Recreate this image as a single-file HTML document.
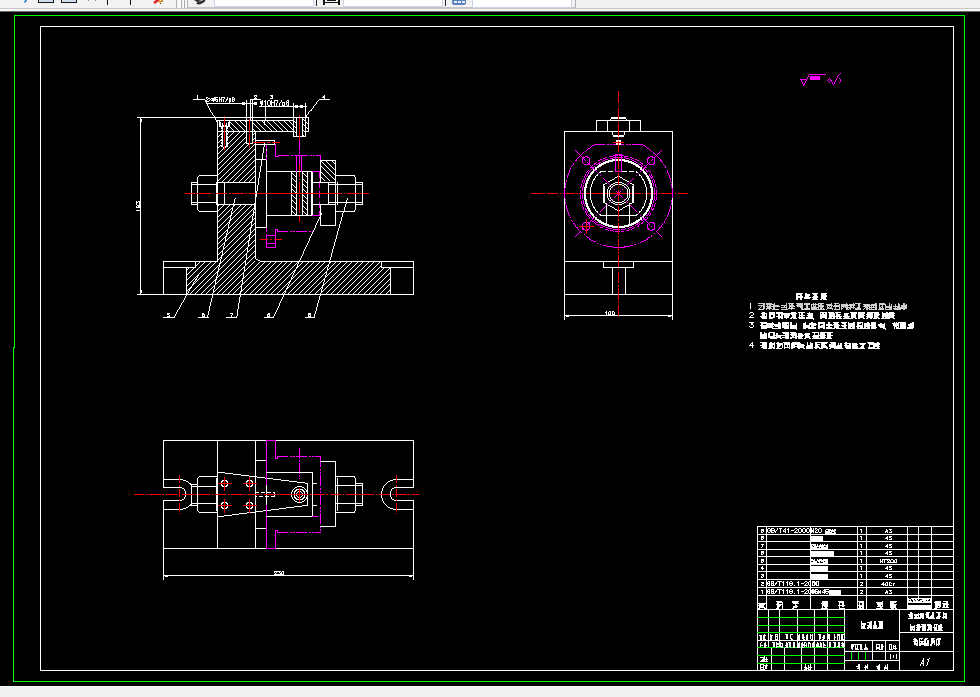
<!DOCTYPE html>
<html><head><meta charset="utf-8"><title>CAD</title>
<style>html,body{margin:0;padding:0;background:#000;overflow:hidden}svg{display:block}text{font-family:"Liberation Sans",sans-serif}</style></head><body>
<svg width="980" height="697" viewBox="0 0 980 697" shape-rendering="crispEdges">
<defs>
<linearGradient id="tg" x1="0" y1="0" x2="0" y2="1"><stop offset="0" stop-color="#f0f0f0"/><stop offset="0.78" stop-color="#ececec"/><stop offset="0.88" stop-color="#8a8a8a"/><stop offset="1" stop-color="#000"/></linearGradient>
</defs>
<rect x="0" y="0" width="980" height="697" fill="#000"/>
<rect x="0" y="0" width="980" height="8" fill="#f0f0f0"/>
<rect x="0" y="8" width="980" height="1" fill="#c9c9c9"/>
<rect x="0" y="9" width="980" height="2" fill="#f5f5f5"/>
<rect x="0" y="11" width="980" height="1" fill="#6a6a6a"/>
<rect x="0" y="0" width="176" height="8" fill="#f2f2f2"/><rect x="176" y="0" width="1" height="8" fill="#b4b4b4"/>
<rect x="178" y="0" width="3" height="8" fill="#fafafa"/><rect x="181" y="0" width="1" height="8" fill="#b0b0b0"/><rect x="183" y="0" width="1" height="8" fill="#fafafa"/><rect x="184" y="0" width="1" height="8" fill="#b0b0b0"/><rect x="186" y="0" width="1" height="8" fill="#fafafa"/><rect x="187" y="0" width="1" height="8" fill="#b0b0b0"/>
<rect x="188" y="0" width="387" height="8" fill="#f2f2f2"/><rect x="575" y="0" width="1" height="8" fill="#b0b0b0"/><rect x="188" y="7" width="388" height="1" fill="#c4c4c4"/>
<rect x="214.5" y="-1" width="99" height="7.5" fill="#fff" stroke="#cdd5e4" stroke-width="1"/>
<rect x="343.5" y="-1" width="99" height="7.5" fill="#fff" stroke="#cdd5e4" stroke-width="1"/>
<rect x="472.5" y="-1" width="99" height="8" fill="#fff" stroke="#cdd5e4" stroke-width="1"/>
<path d="M24.5 2.6L26.6 -0.4" stroke="#2a6fd6" stroke-width="1.6" shape-rendering="auto"/>
<rect x="38.5" y="-1" width="15" height="3.5" fill="#cfdcee" stroke="#1a1a1a" stroke-width="1"/>
<rect x="61.5" y="-1" width="15" height="3.5" fill="#cfdcee" stroke="#1a1a1a" stroke-width="1"/>
<rect x="88" y="0" width="1" height="1" fill="#7a8aa8"/><rect x="95" y="0" width="1" height="1" fill="#7a8aa8"/>
<rect x="107" y="0" width="1" height="5" fill="#111"/><rect x="130" y="0" width="1" height="5" fill="#111"/>
<path d="M154 3L159 -0.5" stroke="#d22" stroke-width="2.6" shape-rendering="auto"/><rect x="159" y="1" width="2" height="2" fill="#f0b000"/><rect x="161" y="0" width="2" height="2" fill="#e08020"/><rect x="160" y="3" width="1" height="1" fill="#444"/>
<path d="M194 0L205.5 0L204.5 2L200 4.6L196 4L197.5 2.2Z" fill="#2e2e2e" shape-rendering="auto"/><path d="M199 1.2L203 0.2" stroke="#ddd" stroke-width="0.8" shape-rendering="auto"/>
<rect x="316" y="0" width="1" height="6" fill="#222"/>
<path d="M324 0V4.5M339 0V4.5M324 2.5H339M327 0.5H336" stroke="#111" stroke-width="1.2" fill="none"/>
<rect x="445" y="0" width="1" height="6" fill="#222"/>
<rect x="452" y="-1" width="14" height="5.5" rx="1" fill="#5d82bd"/><rect x="454" y="1" width="3" height="2" fill="#e4ebf6"/><rect x="458" y="1" width="3" height="2" fill="#e4ebf6"/><rect x="462" y="1" width="3" height="2" fill="#e4ebf6"/>
<rect x="0" y="686" width="980" height="11" fill="#f0f0f0"/><rect x="0" y="686" width="980" height="1" fill="#fbfbfb"/>
<path d="M964.5 15v667M14.5 15v333M13.5 347v335M865.5 652v8M858.5 652v8M851.5 652v8M14 681.5h950M15 15.5h949M757 632.5h88M757 625.5h88M757 663.5h88M757 617.5h88M757 655.5h88M757 647.5h7M766 647.5h10M777 647.5h4M783 647.5h2M788 647.5h2M791 647.5h2M795 647.5h2M800 647.5h1M804 647.5h6M811 647.5h2M814 647.5h7M822 647.5h1M826 647.5h3M830 647.5h3M835 647.5h4M840 647.5h3M844 647.5h1" stroke="#0f0" stroke-width="1" fill="none"/>
<path d="M247.5 247v6M899.5 609v62M252.5 99v45M252.5 216v6M945.5 613v6M766.5 313v6M766.5 322v7M766.5 333v6M766.5 342v7M766.5 526v84M766.5 657v5M766.5 664v5M771.5 342v7M771.5 528v5M771.5 581v5M771.5 589v5M771.5 635v6M771.5 648v7M771.5 656v7M771.5 664v7M953.5 26v645M328.5 182v11M328.5 194v11M328.5 264v3M218.5 267v5M345.5 204v3M947.5 601v7M326.5 271v4M861.5 346v3M861.5 529v4M861.5 536v4M861.5 544v4M861.5 551v4M861.5 559v4M861.5 566v4M861.5 574v4M861.5 621v8M861.5 644v6M845.5 322v7M845.5 342v6M652.5 187v13M762.5 312v7M762.5 342v6M762.5 544v3M762.5 566v4M762.5 590v4M762.5 659v3M822.5 536v6M822.5 601v9M335.5 160v33M335.5 194v32M335.5 239v3M335.5 461v33M335.5 495v32M896.5 322v7M896.5 559v4M896.5 654v5M877.5 342v7M877.5 602v3M877.5 666v3M233.5 130v3M233.5 203v4M40.5 26v645M274.5 100v7M296.5 117v20M296.5 172v21M296.5 194v22M282.5 102v5M815.5 323v3M815.5 342v7M815.5 544v6M815.5 589v5M796.5 293v7M796.5 323v7M796.5 333v6M796.5 605v3M801.5 293v7M801.5 312v7M801.5 333v6M801.5 529v3M801.5 643v12M801.5 656v7M801.5 664v7M312.5 172v21M312.5 194v21M312.5 472v44M215.5 97v4M215.5 117v3M215.5 279v6M891.5 644v6M926.5 612v6M768.5 333v5M768.5 609v8M768.5 618v7M768.5 626v6M768.5 633v14M826.5 312v7M826.5 346v3M289.5 281v3M316.5 307v4M217.5 99v3M217.5 120v73M217.5 194v68M217.5 271v5M217.5 440v54M217.5 495v54M819.5 322v7M819.5 545v5M819.5 559v6M819.5 634v7M255.5 97v3M255.5 131v11M255.5 143v50M255.5 194v65M255.5 440v43M255.5 484v10M255.5 495v10M255.5 506v43M857.5 322v7M857.5 346v3M857.5 526v84M857.5 644v6M777.5 333v5M777.5 342v7M777.5 601v9M777.5 634v7M818.5 322v7M818.5 332v7M818.5 529v3M818.5 581v5M818.5 590v4M818.5 643v4M629.5 120v12M629.5 189v9M629.5 203v23M240.5 291v6M830.5 332v7M830.5 344v5M830.5 642v5M219.5 97v5M219.5 120v7M219.5 263v4M823.5 322v7M823.5 559v6M823.5 635v6M823.5 642v6M243.5 272v7M848.5 316v3M848.5 322v7M237.5 309v7M803.5 323v6M803.5 344v5M803.5 634v7M825.5 293v7M825.5 312v7M825.5 345v3M825.5 530v5M825.5 589v4M140.5 117v178M939.5 601v7M939.5 612v7M939.5 638v7M249.5 234v7M610.5 311v5M782.5 312v7M782.5 322v6M782.5 343v5M782.5 602v8M782.5 643v5M881.5 606v4M881.5 644v6M413.5 261v34M413.5 440v48M413.5 500v80M757.5 526v91M757.5 618v7M757.5 626v6M757.5 633v14M757.5 648v7M757.5 656v7M757.5 664v7M858.5 312v7M858.5 322v7M858.5 664v5M333.5 246v3M228.5 122v5M228.5 224v5M907.5 526v84M307.5 171v22M307.5 194v22M307.5 483v11M307.5 495v11M812.5 313v6M812.5 343v6M812.5 546v4M812.5 581v5M812.5 589v5M812.5 634v7M812.5 643v4M355.5 177v16M355.5 194v16M355.5 478v16M355.5 495v16M828.5 322v7M809.5 323v6M809.5 336v3M809.5 529v3M837.5 312v7M837.5 345v4M837.5 634v7M246.5 100v44M246.5 253v7M941.5 624v7M256.5 102v3M256.5 191v6M779.5 312v7M779.5 343v4M779.5 581v5M779.5 589v5M779.5 604v3M779.5 609v8M779.5 618v7M779.5 626v6M779.5 633v14M839.5 314v5M839.5 601v9M839.5 634v7M839.5 642v6M672.5 131v57M672.5 198v122M264.5 120v5M264.5 143v4M814.5 332v7M814.5 559v6M814.5 581v5M814.5 609v8M814.5 618v7M814.5 626v6M814.5 633v14M814.5 648v7M814.5 656v7M814.5 664v7M207.5 103v3M207.5 315v3M362.5 182v23M362.5 483v11M362.5 495v11M793.5 601v3M793.5 606v4M793.5 642v6M306.5 115v3M908.5 598v5M765.5 642v6M765.5 665v4M286.5 101v4M869.5 323v6M869.5 342v7M869.5 622v6M882.5 312v7M882.5 559v4M882.5 601v6M882.5 621v8M882.5 644v6M920.5 600v3M920.5 613v6M920.5 643v3M918.5 526v74M918.5 613v6M885.5 583v3M885.5 640v21M885.5 665v4M260.5 101v3M260.5 166v6M922.5 598v3M922.5 624v7M922.5 641v4M232.5 97v5M232.5 207v4M209.5 306v5M773.5 312v6M773.5 332v7M773.5 581v5M773.5 589v5M773.5 642v5M336.5 235v4M811.5 322v7M811.5 528v5M938.5 612v7M938.5 625v6M938.5 638v8M795.5 312v7M795.5 332v7M795.5 601v7M836.5 312v7M932.5 612v7M211.5 298v4M285.5 290v3M887.5 530v3M887.5 536v4M887.5 544v4M887.5 551v4M887.5 566v4M887.5 574v4M887.5 582v4M887.5 591v3M887.5 664v7M271.5 100v7M646.5 173v4M646.5 187v13M646.5 210v4M871.5 322v7M871.5 621v8M287.5 286v3M889.5 312v7M889.5 582v4M889.5 644v6M234.5 98v3M234.5 199v4M827.5 332v7M827.5 544v6M827.5 559v6M827.5 566v6M827.5 574v6M827.5 601v6M827.5 608v9M827.5 618v7M827.5 626v6M827.5 633v14M827.5 648v7M827.5 656v7M827.5 664v7M863.5 312v7M863.5 343v6M863.5 601v9M216.5 182v11M216.5 194v11M216.5 276v4M216.5 478v16M216.5 495v16M238.5 303v6M866.5 526v84M866.5 647v3M783.5 581v5M783.5 589v5M917.5 600v3M917.5 624v7M917.5 640v6M650.5 180v8M650.5 199v8M254.5 102v3M254.5 203v7M226.5 123v24M226.5 233v4M317.5 303v4M919.5 624v7M919.5 638v8M759.5 603v7M564.5 131v57M564.5 198v122M913.5 322v6M913.5 598v5M266.5 160v33M266.5 194v34M266.5 485v9M266.5 495v10M868.5 625v4M627.5 189v9M893.5 312v7M893.5 323v3M893.5 560v3M893.5 583v3M893.5 601v9M893.5 645v4M893.5 655v3M931.5 526v84M931.5 615v4M931.5 625v6M931.5 638v8M810.5 342v7M810.5 526v84M810.5 634v5M810.5 643v5M810.5 664v7M327.5 267v4M844.5 313v6M844.5 322v7M844.5 608v9M844.5 618v7M844.5 626v6M844.5 633v14M844.5 648v7M844.5 656v7M844.5 664v7M847.5 313v6M943.5 603v5M943.5 612v7M764.5 312v7M764.5 332v7M764.5 607v3M764.5 634v7M764.5 643v5M764.5 656v6M898.5 322v7M824.5 322v7M824.5 332v7M824.5 589v5M824.5 635v4M340.5 221v3M817.5 344v4M817.5 544v3M817.5 591v3M817.5 642v5M760.5 332v7M760.5 635v6M760.5 643v4M760.5 664v7M894.5 322v7M894.5 560v3M319.5 296v4M816.5 293v7M816.5 342v7M816.5 546v4M816.5 561v4M816.5 581v5M816.5 644v3M263.5 147v6M870.5 621v8M331.5 253v4M933.5 612v7M279.5 103v4M279.5 303v3M270.5 101v4M308.5 117v15M308.5 313v5M197.5 95v5M197.5 177v16M197.5 194v16M197.5 275v3M197.5 478v33M346.5 200v4M323.5 282v4M230.5 98v4M230.5 215v6M805.5 293v6M805.5 322v7M805.5 333v6M805.5 529v3M805.5 664v7M925.5 624v7M925.5 638v8M259.5 172v6M900.5 322v7M311.5 171v22M311.5 194v22M297.5 105v3M297.5 264v4M338.5 228v3M612.5 131v4M612.5 159v3M612.5 225v3M612.5 267v28M612.5 311v5M851.5 312v7M851.5 644v5M309.5 238v3M914.5 600v3M914.5 625v6M914.5 638v7M600.5 164v3M600.5 220v3M930.5 598v5M930.5 616v3M930.5 624v7M635.5 163v3M635.5 221v3M304.5 491v3M304.5 495v3M293.5 103v34M614.5 312v4M295.5 105v3M921.5 600v3M921.5 641v4M833.5 312v7M833.5 551v6M937.5 616v3M596.5 120v12M596.5 167v3M596.5 217v3M936.5 624v7M936.5 639v7M334.5 242v4M886.5 529v3M886.5 590v3M302.5 105v3M302.5 117v20M302.5 171v22M302.5 194v22M314.5 314v4M804.5 642v5M867.5 312v7M867.5 322v7M867.5 664v5M806.5 346v3M806.5 529v3M806.5 635v6M806.5 643v4M806.5 667v4M916.5 598v5M916.5 639v3M916.5 643v3M189.5 288v3M604.5 186v17M834.5 313v6M834.5 322v7M834.5 529v6M834.5 634v7M834.5 642v6M644.5 171v3M644.5 181v3M644.5 203v3M644.5 213v3M163.5 261v34M163.5 440v48M163.5 500v80M841.5 343v6M841.5 634v7M813.5 296v4M813.5 335v4M813.5 528v5M813.5 589v5M813.5 642v6M585.5 183v21M191.5 182v11M191.5 194v11M191.5 484v10M191.5 495v11M792.5 312v6M792.5 342v7M792.5 582v3M792.5 590v3M820.5 312v7M820.5 332v7M820.5 544v3M820.5 590v4M820.5 634v5M820.5 642v5M842.5 601v6M842.5 634v7M842.5 642v5M606.5 203v23M606.5 311v5M784.5 313v5M784.5 342v7M784.5 648v7M784.5 656v7M784.5 664v7M261.5 101v6M261.5 159v7M761.5 322v7M761.5 332v7M761.5 529v4M761.5 536v4M761.5 551v4M761.5 559v4M761.5 635v6M212.5 98v3M212.5 293v5M872.5 312v6M872.5 640v21M852.5 343v6M852.5 644v6M791.5 312v3M791.5 322v7M791.5 332v4M791.5 343v6M791.5 638v3M821.5 293v7M821.5 325v3M821.5 342v7M821.5 529v3M821.5 559v3M821.5 643v5M275.5 573v3M321.5 289v4M608.5 160v3M608.5 224v3M608.5 312v4M272.5 95v4M874.5 312v7M874.5 621v8M284.5 102v5M587.5 178v6M587.5 203v6M770.5 312v7M770.5 336v3M770.5 529v3M770.5 634v7M855.5 312v7M855.5 644v6M221.5 97v5M221.5 126v3M221.5 255v4M300.5 105v3M202.5 313v5M253.5 210v6M862.5 322v7M862.5 601v9M241.5 284v8M864.5 323v6M864.5 623v6M248.5 240v7M227.5 97v3M227.5 126v3M227.5 136v5M227.5 142v5M227.5 229v4M609.5 190v7M382.5 488v3M382.5 498v3M905.5 322v7M239.5 297v6M843.5 601v6M856.5 343v6M330.5 257v3M794.5 342v6M794.5 642v6M935.5 601v9M645.5 172v3M645.5 184v3M645.5 200v3M645.5 212v3M631.5 161v3M631.5 223v3M324.5 95v5M324.5 278v4M763.5 529v3M763.5 536v3M763.5 551v3M763.5 559v3M763.5 574v3M763.5 603v5M763.5 635v6M763.5 664v7M276.5 103v4M798.5 333v6M798.5 529v3M798.5 581v5M798.5 589v5M222.5 123v24M222.5 250v6M344.5 207v5M846.5 342v7M797.5 293v7M797.5 342v6M797.5 601v3M797.5 609v8M797.5 618v7M797.5 626v6M797.5 633v15M267.5 101v4M267.5 314v4M332.5 249v4M607.5 120v12M607.5 189v9M876.5 625v4M876.5 644v6M853.5 644v3M262.5 100v5M262.5 153v7M322.5 285v4M776.5 333v6M776.5 642v6M381.5 261v7M381.5 491v3M381.5 495v3M265.5 100v21M281.5 572v4M883.5 582v4M778.5 312v7M778.5 322v7M778.5 342v7M778.5 601v9M280.5 573v3M832.5 529v3M632.5 186v17M895.5 604v6M895.5 645v5M808.5 313v6M808.5 325v4M808.5 582v3M808.5 590v3M808.5 642v5M808.5 665v6M785.5 332v7M785.5 528v5M750.5 303v6M780.5 323v6M780.5 335v4M780.5 343v3M780.5 528v5M780.5 642v5M250.5 99v22M250.5 227v8M193.5 282v3M590.5 173v4M590.5 187v13M590.5 210v4M213.5 98v4M213.5 289v4M229.5 98v6M229.5 120v7M229.5 220v4M789.5 313v3M789.5 342v7M789.5 582v3M789.5 590v3M789.5 642v5M223.5 99v3M223.5 246v4M860.5 325v4M860.5 644v6M875.5 322v7M875.5 621v8M873.5 342v7M873.5 625v4M840.5 316v3M840.5 343v6M840.5 590v6M878.5 312v4M878.5 342v7M878.5 665v6M224.5 182v11M224.5 194v11M224.5 242v4M291.5 171v22M291.5 194v22M291.5 277v3M599.5 164v3M599.5 220v3M890.5 560v3M890.5 601v7M890.5 654v5M242.5 102v3M242.5 278v7M298.5 261v3M283.5 294v3M283.5 571v5M802.5 312v7M802.5 334v3M802.5 529v3M802.5 634v5M802.5 642v6M251.5 221v7M257.5 185v6M915.5 638v7M786.5 634v5M786.5 642v6M245.5 260v6M787.5 342v6M787.5 581v5M787.5 589v5M787.5 634v5M787.5 643v5M831.5 530v5M220.5 122v5M220.5 259v5M767.5 529v3M767.5 582v3M767.5 590v3M231.5 211v5M231.5 315v3M592.5 171v3M592.5 181v3M592.5 203v3M592.5 213v3M294.5 270v3M294.5 491v3M294.5 495v3M647.5 175v4M647.5 208v4M944.5 603v5M186.5 267v29M318.5 300v3M800.5 293v7M204.5 314v4M769.5 312v7M769.5 332v6M769.5 343v6M769.5 581v5M769.5 589v5M781.5 312v7M790.5 322v7M790.5 634v5M790.5 642v6M225.5 236v6M595.5 167v3M595.5 217v3M850.5 343v6M625.5 267v28M838.5 324v5M838.5 343v6M838.5 642v5M859.5 601v9M859.5 664v7M305.5 103v34M269.5 313v5M912.5 322v7M912.5 613v6M912.5 626v4M208.5 311v4M924.5 639v7M640.5 120v12M640.5 167v3M640.5 217v3M593.5 169v4M593.5 214v4M923.5 613v6M923.5 658v8M605.5 161v3M605.5 223v3M775.5 324v3M775.5 634v7M772.5 322v7M772.5 343v5M927.5 640v6M927.5 662v3M934.5 624v7M934.5 640v5M586.5 180v8M586.5 199v8M807.5 342v7M807.5 634v7M136.5 201v4M854.5 322v7M303.5 251v3M601.5 163v3M601.5 221v3M277.5 100v3M788.5 313v5M788.5 322v7M788.5 332v7M788.5 528v5M598.5 165v3M598.5 219v3M288.5 100v7M169.5 315v3M329.5 260v4M641.5 167v3M641.5 217v3M835.5 342v7M835.5 532v3M835.5 642v5M879.5 324v3M879.5 621v8M879.5 644v6M879.5 664v7M310.5 313v5M342.5 213v4M206.5 100v4M624.5 131v4M624.5 159v3M624.5 225v3M628.5 160v3M628.5 224v3M643.5 169v4M643.5 214v4M880.5 323v5M880.5 559v4M880.5 602v8M829.5 312v7M829.5 322v7M829.5 344v3M829.5 590v6M829.5 634v7M829.5 642v6M884.5 323v6M884.5 559v4M884.5 667v4M751.5 322v3M214.5 97v4M214.5 285v4M865.5 644v6M865.5 665v6M244.5 102v3M244.5 130v3M244.5 266v6M195.5 261v7M928.5 612v7M928.5 624v7M928.5 640v6M928.5 659v3M649.5 178v6M649.5 203v6M603.5 162v3M603.5 184v19M603.5 222v3M603.5 261v7M341.5 217v4M139.5 201v7M138.5 205v3M591.5 172v3M591.5 184v3M591.5 200v3M591.5 212v3M799.5 312v7M799.5 342v7M799.5 634v7M799.5 642v6M910.5 599v4M910.5 612v7M910.5 624v7M940.5 601v6M315.5 225v3M315.5 311v3M390.5 267v28M390.5 491v6M584.5 187v13M636.5 164v3M636.5 220v3M633.5 162v3M633.5 184v19M633.5 222v3M633.5 261v7M589.5 175v4M589.5 208v4M909.5 614v3M320.5 160v23M320.5 204v22M320.5 293v3M337.5 182v11M337.5 194v11M337.5 231v4M337.5 478v16M337.5 495v16M638.5 165v3M638.5 219v3M210.5 302v4M258.5 178v7M185.5 491v3M325.5 275v3M637.5 164v3M637.5 220v3M774.5 312v6M774.5 332v7M774.5 342v7M774.5 529v3M774.5 642v5M946.5 601v7M946.5 613v6M648.5 176v5M648.5 206v5M588.5 176v5M588.5 206v5M339.5 224v4M141.5 119v3M141.5 290v3M752.5 322v3M752.5 342v6M651.5 183v21M41 26.5h912M761 669.5h4M804 669.5h1M809 669.5h1M182 499.5h2M293 499.5h1M296 499.5h3M300 499.5h3M305 499.5h1M392 499.5h2M243 104.5h1M255 104.5h1M315 104.5h1M758 556.5h195M753 325.5h1M760 325.5h12M774 325.5h6M783 325.5h5M792 325.5h4M804 325.5h4M812 325.5h3M822 325.5h1M826 325.5h7M835 325.5h5M841 325.5h6M849 325.5h5M859 325.5h3M865 325.5h10M878 325.5h6M895 325.5h3M901 325.5h4M908 325.5h4M220 151.5h1M225 151.5h1M231 151.5h1M236 151.5h1M241 151.5h1M247 151.5h1M252 151.5h1M193 99.5h12M207 99.5h1M210 99.5h1M216 99.5h1M220 99.5h1M226 99.5h1M233 99.5h1M251 99.5h10M319 99.5h11M137 202.5h1M192 202.5h24M294 202.5h1M305 202.5h1M329 202.5h33M611 202.5h2M615 202.5h7M624 202.5h2M218 227.5h1M223 227.5h1M229 227.5h1M234 227.5h1M239 227.5h1M245 227.5h1M256 227.5h10M613 227.5h5M619 227.5h5M188 268.5h1M193 268.5h1M198 268.5h1M204 268.5h1M209 268.5h1M215 268.5h1M220 268.5h1M226 268.5h1M231 268.5h1M237 268.5h1M242 268.5h1M247 268.5h1M253 268.5h1M258 268.5h1M264 268.5h1M269 268.5h1M275 268.5h1M280 268.5h1M285 268.5h1M291 268.5h1M296 268.5h1M302 268.5h1M307 268.5h1M313 268.5h1M318 268.5h1M324 268.5h1M329 268.5h1M334 268.5h1M340 268.5h1M345 268.5h1M351 268.5h1M356 268.5h1M362 268.5h1M367 268.5h1M373 268.5h1M378 268.5h1M383 268.5h1M389 268.5h1M779 602.5h3M792 602.5h5M823 602.5h4M840 602.5h2M860 602.5h2M876 602.5h6M891 602.5h5M909 602.5h21M934 602.5h5M762 562.5h1M811 562.5h5M824 562.5h3M887 562.5h9M293 196.5h1M304 196.5h1M760 607.5h3M794 607.5h1M825 607.5h2M860 607.5h1M891 607.5h4M908 607.5h23M936 607.5h3M942 607.5h7M222 223.5h1M227 223.5h1M233 223.5h1M238 223.5h1M243 223.5h1M249 223.5h1M254 223.5h1M316 223.5h1M602 223.5h3M632 223.5h3M167 314.5h2M175 314.5h1M203 314.5h1M232 314.5h1M268 314.5h1M274 314.5h1M309 314.5h1M609 314.5h1M613 314.5h1M753 314.5h1M763 314.5h1M771 314.5h2M783 314.5h5M793 314.5h2M809 314.5h3M821 314.5h4M830 314.5h3M838 314.5h3M845 314.5h2M852 314.5h3M859 314.5h4M866 314.5h6M875 314.5h5M883 314.5h10M222 212.5h1M227 212.5h1M233 212.5h1M238 212.5h1M244 212.5h1M249 212.5h1M254 212.5h1M293 212.5h1M304 212.5h1M343 212.5h1M597 212.5h1M639 212.5h1M274 571.5h7M282 571.5h1M758 571.5h195M164 509.5h15M180 509.5h3M271 509.5h8M393 509.5h3M397 509.5h16M761 567.5h1M811 567.5h16M886 567.5h1M889 567.5h2M198 263.5h1M203 263.5h1M209 263.5h1M214 263.5h1M225 263.5h1M231 263.5h1M236 263.5h1M242 263.5h1M247 263.5h1M252 263.5h1M258 263.5h1M263 263.5h1M269 263.5h1M274 263.5h1M280 263.5h1M285 263.5h1M290 263.5h1M296 263.5h1M301 263.5h1M307 263.5h1M312 263.5h1M318 263.5h1M323 263.5h1M334 263.5h1M339 263.5h1M345 263.5h1M350 263.5h1M356 263.5h1M361 263.5h1M367 263.5h1M372 263.5h1M378 263.5h1M187 279.5h1M193 279.5h1M195 279.5h2M198 279.5h1M204 279.5h1M209 279.5h1M220 279.5h1M226 279.5h1M231 279.5h1M236 279.5h1M247 279.5h1M253 279.5h1M258 279.5h1M264 279.5h1M269 279.5h1M274 279.5h1M280 279.5h1M285 279.5h1M296 279.5h1M302 279.5h1M307 279.5h1M313 279.5h1M318 279.5h1M323 279.5h1M329 279.5h1M334 279.5h1M340 279.5h1M345 279.5h1M351 279.5h1M356 279.5h1M362 279.5h1M367 279.5h1M372 279.5h1M378 279.5h1M383 279.5h1M389 279.5h1M137 294.5h276M565 294.5h53M619 294.5h53M798 294.5h2M806 294.5h4M813 294.5h3M822 294.5h3M911 613.5h1M921 613.5h2M927 613.5h1M944 613.5h1M216 120.5h8M225 120.5h24M251 120.5h42M304 120.5h1M597 120.5h43M222 217.5h1M228 217.5h1M233 217.5h1M239 217.5h1M244 217.5h1M249 217.5h1M319 217.5h1M762 551.5h1M811 551.5h22M860 551.5h1M889 551.5h3M761 577.5h2M811 577.5h16M889 577.5h3M187 285.5h1M192 285.5h1M198 285.5h1M203 285.5h1M209 285.5h1M220 285.5h1M225 285.5h1M230 285.5h1M236 285.5h1M247 285.5h1M252 285.5h1M258 285.5h1M263 285.5h1M268 285.5h1M274 285.5h1M279 285.5h1M285 285.5h1M288 285.5h1M290 285.5h1M296 285.5h1M301 285.5h1M307 285.5h1M312 285.5h1M317 285.5h1M328 285.5h1M334 285.5h1M339 285.5h1M345 285.5h1M350 285.5h1M356 285.5h1M361 285.5h1M366 285.5h1M372 285.5h1M377 285.5h1M383 285.5h1M388 285.5h1M749 326.5h1M753 326.5h1M762 326.5h12M776 326.5h4M783 326.5h5M792 326.5h4M804 326.5h4M812 326.5h2M820 326.5h3M835 326.5h3M842 326.5h2M849 326.5h5M856 326.5h6M865 326.5h4M872 326.5h3M881 326.5h3M895 326.5h1M901 326.5h4M909 326.5h3M221 161.5h1M226 161.5h1M231 161.5h1M237 161.5h1M242 161.5h1M248 161.5h1M253 161.5h1M321 161.5h1M326 161.5h1M332 161.5h1M606 161.5h6M625 161.5h6M762 336.5h4M771 336.5h2M778 336.5h2M786 336.5h2M792 336.5h2M797 336.5h4M806 336.5h3M812 336.5h6M821 336.5h3M828 336.5h2M192 182.5h5M218 182.5h37M306 182.5h1M313 182.5h22M356 182.5h6M615 182.5h3M619 182.5h3M241 475.5h8M220 172.5h1M226 172.5h1M231 172.5h1M237 172.5h1M242 172.5h1M248 172.5h1M253 172.5h1M321 172.5h1M327 172.5h1M332 172.5h1M599 172.5h2M636 172.5h2M762 583.5h2M768 583.5h1M772 583.5h1M775 583.5h2M790 583.5h2M801 583.5h3M806 583.5h1M815 583.5h1M862 583.5h1M882 583.5h1M891 583.5h1M894 583.5h1M760 342.5h6M770 342.5h1M783 342.5h6M793 342.5h6M817 342.5h11M830 342.5h5M867 342.5h6M222 239.5h1M227 239.5h1M233 239.5h1M238 239.5h1M244 239.5h1M911 629.5h3M916 629.5h3M923 629.5h2M927 629.5h3M935 629.5h1M939 629.5h2M761 645.5h2M766 645.5h1M785 645.5h1M798 645.5h1M803 645.5h3M824 645.5h2M841 645.5h3M926 645.5h1M930 645.5h1M862 624.5h4M880 624.5h2M918 624.5h1M921 624.5h4M927 624.5h3M935 624.5h3M940 624.5h1M187 290.5h1M193 290.5h1M198 290.5h1M204 290.5h1M209 290.5h1M215 290.5h1M220 290.5h1M225 290.5h1M231 290.5h1M236 290.5h1M242 290.5h1M247 290.5h1M253 290.5h1M258 290.5h1M263 290.5h1M269 290.5h1M274 290.5h1M280 290.5h1M291 290.5h1M296 290.5h1M302 290.5h1M307 290.5h1M312 290.5h1M318 290.5h1M323 290.5h1M329 290.5h1M334 290.5h1M340 290.5h1M345 290.5h1M351 290.5h1M356 290.5h1M361 290.5h1M367 290.5h1M372 290.5h1M378 290.5h1M383 290.5h1M389 290.5h1M758 640.5h141M932 640.5h2M320 526.5h15M758 526.5h195M222 244.5h1M228 244.5h1M233 244.5h1M239 244.5h1M244 244.5h1M250 244.5h1M307 244.5h1M218 131.5h6M225 131.5h24M250 131.5h45M304 131.5h4M565 131.5h53M619 131.5h53M762 532.5h1M768 532.5h2M772 532.5h2M775 532.5h1M794 532.5h4M799 532.5h2M803 532.5h2M807 532.5h2M815 532.5h3M819 532.5h2M826 532.5h5M885 532.5h1M889 532.5h3M183 480.5h3M222 480.5h2M225 480.5h2M247 480.5h2M250 480.5h2M281 480.5h8M390 480.5h3M292 491.5h1M295 491.5h1M298 491.5h1M300 491.5h1M303 491.5h1M306 491.5h1M221 177.5h1M226 177.5h1M232 177.5h1M237 177.5h1M243 177.5h1M248 177.5h1M253 177.5h1M321 177.5h1M326 177.5h1M332 177.5h1M595 177.5h1M615 177.5h2M620 177.5h2M641 177.5h1M768 589.5h1M772 589.5h1M777 589.5h5M790 589.5h2M805 589.5h2M809 589.5h1M816 589.5h2M826 589.5h3M761 347.5h5M770 347.5h4M785 347.5h4M793 347.5h1M798 347.5h5M808 347.5h4M814 347.5h6M822 347.5h6M831 347.5h9M847 347.5h3M853 347.5h3M860 347.5h3M868 347.5h7M830 594.5h10M223 126.5h1M225 126.5h1M234 126.5h1M240 126.5h1M245 126.5h1M256 126.5h1M261 126.5h1M267 126.5h1M272 126.5h1M278 126.5h1M283 126.5h1M289 126.5h1M294 126.5h1M845 651.5h108M164 548.5h102M276 548.5h137M811 548.5h16M222 234.5h1M227 234.5h1M232 234.5h1M238 234.5h1M243 234.5h1M254 234.5h1M311 234.5h1M221 143.5h1M228 143.5h1M233 143.5h1M239 143.5h1M244 143.5h1M247 143.5h2M250 143.5h2M274 143.5h1M616 143.5h2M619 143.5h2M760 661.5h8M922 661.5h1M192 486.5h24M222 486.5h2M225 486.5h2M247 486.5h2M250 486.5h2M297 486.5h5M383 486.5h1M218 142.5h1M221 142.5h1M229 142.5h1M234 142.5h1M240 142.5h1M245 142.5h1M164 261.5h53M222 261.5h1M227 261.5h1M233 261.5h1M238 261.5h1M244 261.5h1M249 261.5h1M254 261.5h1M260 261.5h153M565 261.5h53M619 261.5h53M758 595.5h195M164 440.5h102M276 440.5h137M163 317.5h12M198 317.5h11M226 317.5h11M264 317.5h10M305 317.5h9M749 317.5h5M761 317.5h5M771 317.5h2M780 317.5h1M785 317.5h3M791 317.5h4M798 317.5h7M806 317.5h6M821 317.5h4M830 317.5h2M845 317.5h2M852 317.5h3M859 317.5h4M868 317.5h4M875 317.5h4M883 317.5h1M885 317.5h8M167 313.5h3M176 313.5h1M203 313.5h1M230 313.5h3M268 313.5h1M275 313.5h1M309 313.5h1M749 313.5h1M753 313.5h1M761 313.5h5M771 313.5h2M776 313.5h21M807 313.5h5M822 313.5h2M830 313.5h3M845 313.5h4M852 313.5h5M859 313.5h6M868 313.5h4M875 313.5h3M883 313.5h12M758 605.5h5M780 605.5h1M823 605.5h4M838 605.5h7M858 605.5h4M878 605.5h2M891 605.5h4M908 605.5h23M936 605.5h3M761 584.5h1M775 584.5h1M805 584.5h1M815 584.5h1M861 584.5h1M881 584.5h4M608 188.5h1M610 188.5h1M626 188.5h1M628 188.5h1M200 266.5h1M206 266.5h1M211 266.5h1M217 266.5h1M222 266.5h1M228 266.5h1M233 266.5h1M239 266.5h1M249 266.5h1M255 266.5h1M260 266.5h1M266 266.5h1M271 266.5h1M277 266.5h1M282 266.5h1M287 266.5h1M293 266.5h1M298 266.5h1M304 266.5h1M309 266.5h1M315 266.5h1M320 266.5h1M326 266.5h1M331 266.5h1M336 266.5h1M342 266.5h1M347 266.5h1M353 266.5h1M358 266.5h1M364 266.5h1M369 266.5h1M375 266.5h1M380 266.5h1M192 204.5h5M218 204.5h36M313 204.5h22M356 204.5h6M615 204.5h3M619 204.5h3M761 667.5h2M804 667.5h1M809 667.5h3M864 667.5h3M886 667.5h1M256 528.5h10M768 528.5h2M772 528.5h2M777 528.5h1M779 528.5h3M795 528.5h2M799 528.5h2M803 528.5h2M807 528.5h2M815 528.5h2M819 528.5h2M762 554.5h1M811 554.5h22M889 554.5h3M763 318.5h3M771 318.5h2M786 318.5h1M790 318.5h2M793 318.5h4M800 318.5h5M806 318.5h8M821 318.5h1M828 318.5h5M838 318.5h4M843 318.5h10M856 318.5h1M859 318.5h1M864 318.5h1M866 318.5h1M870 318.5h2M873 318.5h4M878 318.5h2M881 318.5h8M894 318.5h1M219 215.5h1M224 215.5h1M235 215.5h1M241 215.5h1M246 215.5h1M251 215.5h1M267 215.5h44M600 215.5h18M619 215.5h18M758 549.5h195M190 271.5h1M195 271.5h1M201 271.5h1M206 271.5h1M212 271.5h1M223 271.5h1M228 271.5h1M234 271.5h1M239 271.5h1M250 271.5h1M255 271.5h1M261 271.5h1M266 271.5h1M272 271.5h1M277 271.5h1M282 271.5h1M288 271.5h1M293 271.5h1M299 271.5h1M304 271.5h1M310 271.5h1M315 271.5h1M321 271.5h1M331 271.5h1M337 271.5h1M342 271.5h1M348 271.5h1M353 271.5h1M359 271.5h1M364 271.5h1M370 271.5h1M375 271.5h1M380 271.5h1M386 271.5h1M176 312.5h1M275 312.5h1M605 312.5h1M750 312.5h3M763 312.5h1M771 312.5h2M776 312.5h5M793 312.5h2M798 312.5h7M809 312.5h1M821 312.5h4M828 312.5h5M835 312.5h6M850 312.5h7M859 312.5h6M868 312.5h10M886 312.5h2M890 312.5h3M222 502.5h2M225 502.5h2M247 502.5h2M250 502.5h2M297 502.5h5M383 502.5h1M190 276.5h1M196 276.5h1M201 276.5h1M207 276.5h1M212 276.5h1M218 276.5h1M223 276.5h1M229 276.5h1M234 276.5h1M239 276.5h1M245 276.5h1M250 276.5h1M256 276.5h1M261 276.5h1M267 276.5h1M272 276.5h1M277 276.5h1M283 276.5h1M288 276.5h1M292 276.5h1M294 276.5h1M299 276.5h1M305 276.5h1M310 276.5h1M316 276.5h1M321 276.5h1M326 276.5h1M332 276.5h1M337 276.5h1M343 276.5h1M348 276.5h1M354 276.5h1M359 276.5h1M365 276.5h1M370 276.5h1M375 276.5h1M381 276.5h1M386 276.5h1M136 206.5h1M222 206.5h1M228 206.5h1M239 206.5h1M244 206.5h1M250 206.5h1M292 206.5h1M303 206.5h1M593 206.5h1M610 206.5h2M625 206.5h2M643 206.5h1M137 205.5h1M218 205.5h1M223 205.5h1M229 205.5h1M234 205.5h1M240 205.5h1M245 205.5h1M251 205.5h1M608 205.5h2M627 205.5h2M184 497.5h1M292 497.5h1M295 497.5h1M298 497.5h1M300 497.5h1M303 497.5h1M306 497.5h1M391 497.5h1M192 503.5h24M221 503.5h2M226 503.5h2M246 503.5h2M251 503.5h2M336 503.5h26M384 503.5h1M760 606.5h3M794 606.5h4M824 606.5h3M860 606.5h2M877 606.5h3M891 606.5h4M908 606.5h23M936 606.5h2M233 138.5h1M238 138.5h1M244 138.5h1M254 138.5h1M911 616.5h1M915 616.5h2M921 616.5h2M927 616.5h1M940 616.5h1M944 616.5h1M208 103.5h48M316 103.5h1M862 626.5h2M880 626.5h2M911 626.5h3M918 626.5h7M929 626.5h1M939 626.5h2M761 544.5h3M811 544.5h4M822 544.5h1M824 544.5h1M860 544.5h1M889 544.5h3M206 98.5h1M208 98.5h2M211 98.5h1M224 98.5h1M254 98.5h3M270 98.5h2M164 575.5h249M762 575.5h1M811 575.5h16M886 575.5h1M889 575.5h2M222 170.5h1M228 170.5h1M233 170.5h1M239 170.5h1M244 170.5h1M250 170.5h1M325 170.5h1M330 170.5h1M594 170.5h1M642 170.5h1M223 159.5h1M228 159.5h1M233 159.5h1M239 159.5h1M244 159.5h1M250 159.5h1M256 159.5h10M613 159.5h2M616 159.5h2M619 159.5h2M622 159.5h2M762 560.5h1M811 560.5h3M817 560.5h10M887 560.5h1M889 560.5h1M762 334.5h4M786 334.5h2M790 334.5h5M799 334.5h2M804 334.5h6M821 334.5h3M828 334.5h2M218 221.5h1M224 221.5h1M235 221.5h1M240 221.5h1M245 221.5h1M317 221.5h1M219 226.5h1M224 226.5h1M230 226.5h1M235 226.5h1M240 226.5h1M246 226.5h1M609 226.5h9M619 226.5h9M189 283.5h1M194 283.5h1M200 283.5h1M205 283.5h1M211 283.5h1M216 283.5h1M222 283.5h1M227 283.5h1M232 283.5h1M238 283.5h1M243 283.5h1M249 283.5h1M254 283.5h1M260 283.5h1M265 283.5h1M270 283.5h1M276 283.5h1M281 283.5h1M287 283.5h1M292 283.5h1M298 283.5h1M303 283.5h1M309 283.5h1M314 283.5h1M319 283.5h1M325 283.5h1M330 283.5h1M336 283.5h1M341 283.5h1M347 283.5h1M352 283.5h1M358 283.5h1M363 283.5h1M368 283.5h1M374 283.5h1M379 283.5h1M385 283.5h1M762 335.5h4M775 335.5h13M792 335.5h3M799 335.5h5M806 335.5h3M815 335.5h11M828 335.5h5M189 272.5h1M194 272.5h1M200 272.5h1M205 272.5h1M211 272.5h1M216 272.5h1M222 272.5h1M227 272.5h1M233 272.5h1M238 272.5h1M249 272.5h1M254 272.5h1M260 272.5h1M265 272.5h1M271 272.5h1M276 272.5h1M281 272.5h1M287 272.5h1M292 272.5h1M298 272.5h1M303 272.5h1M309 272.5h1M314 272.5h1M320 272.5h1M325 272.5h1M330 272.5h1M336 272.5h1M341 272.5h1M347 272.5h1M352 272.5h1M358 272.5h1M363 272.5h1M369 272.5h1M374 272.5h1M379 272.5h1M385 272.5h1M218 216.5h1M223 216.5h1M229 216.5h1M234 216.5h1M240 216.5h1M245 216.5h1M250 216.5h1M594 216.5h1M642 216.5h1M187 293.5h1M190 293.5h1M195 293.5h1M201 293.5h1M206 293.5h1M217 293.5h1M222 293.5h1M228 293.5h1M233 293.5h1M239 293.5h1M244 293.5h1M250 293.5h1M255 293.5h1M260 293.5h1M266 293.5h1M271 293.5h1M277 293.5h1M282 293.5h1M284 293.5h1M288 293.5h1M293 293.5h1M299 293.5h1M304 293.5h1M309 293.5h1M315 293.5h1M326 293.5h1M331 293.5h1M337 293.5h1M342 293.5h1M348 293.5h1M353 293.5h1M358 293.5h1M364 293.5h1M369 293.5h1M375 293.5h1M380 293.5h1M386 293.5h1M798 293.5h5M806 293.5h1M812 293.5h6M822 293.5h5M862 627.5h2M867 627.5h1M878 627.5h4M911 627.5h3M916 627.5h5M923 627.5h2M929 627.5h1M933 627.5h3M939 627.5h4M265 478.5h1M267 478.5h6M219 237.5h1M224 237.5h1M229 237.5h1M235 237.5h1M240 237.5h1M246 237.5h1M251 237.5h1M310 237.5h1M188 278.5h1M194 278.5h1M196 278.5h1M199 278.5h1M205 278.5h1M210 278.5h1M221 278.5h1M227 278.5h1M232 278.5h1M237 278.5h1M248 278.5h1M254 278.5h1M259 278.5h1M265 278.5h1M270 278.5h1M275 278.5h1M281 278.5h1M286 278.5h1M292 278.5h1M297 278.5h1M303 278.5h1M308 278.5h1M314 278.5h1M319 278.5h1M330 278.5h1M335 278.5h1M341 278.5h1M346 278.5h1M352 278.5h1M357 278.5h1M363 278.5h1M368 278.5h1M373 278.5h1M379 278.5h1M384 278.5h1M218 164.5h1M223 164.5h1M228 164.5h1M234 164.5h1M239 164.5h1M245 164.5h1M250 164.5h1M324 164.5h1M329 164.5h1M602 164.5h1M634 164.5h1M165 576.5h3M409 576.5h3M761 576.5h1M811 576.5h16M885 576.5h2M891 576.5h1M862 628.5h4M867 628.5h1M877 628.5h5M911 628.5h1M918 628.5h1M923 628.5h2M929 628.5h1M935 628.5h1M939 628.5h2M190 288.5h1M195 288.5h1M200 288.5h1M206 288.5h1M211 288.5h1M217 288.5h1M222 288.5h1M227 288.5h1M233 288.5h1M238 288.5h1M244 288.5h1M249 288.5h1M255 288.5h1M260 288.5h1M265 288.5h1M271 288.5h1M276 288.5h1M282 288.5h1M286 288.5h1M293 288.5h1M298 288.5h1M304 288.5h1M309 288.5h1M314 288.5h1M320 288.5h1M325 288.5h1M331 288.5h1M336 288.5h1M342 288.5h1M347 288.5h1M353 288.5h1M358 288.5h1M363 288.5h1M369 288.5h1M374 288.5h1M380 288.5h1M385 288.5h1M198 176.5h1M222 176.5h1M227 176.5h1M233 176.5h1M238 176.5h1M244 176.5h1M249 176.5h1M254 176.5h1M295 176.5h1M306 176.5h1M325 176.5h1M331 176.5h1M354 176.5h1M595 176.5h1M617 176.5h1M619 176.5h1M641 176.5h1M798 638.5h1M828 638.5h1M920 638.5h3M926 638.5h2M932 638.5h3M937 638.5h4M232 514.5h7M761 582.5h3M776 582.5h1M782 582.5h1M786 582.5h1M797 582.5h1M804 582.5h1M807 582.5h1M813 582.5h3M860 582.5h3M886 582.5h1M890 582.5h1M188 289.5h1M194 289.5h1M199 289.5h1M205 289.5h1M210 289.5h1M216 289.5h1M221 289.5h1M226 289.5h1M232 289.5h1M237 289.5h1M243 289.5h1M248 289.5h1M254 289.5h1M259 289.5h1M264 289.5h1M270 289.5h1M275 289.5h1M281 289.5h1M286 289.5h1M292 289.5h1M297 289.5h1M303 289.5h1M308 289.5h1M313 289.5h1M319 289.5h1M324 289.5h1M330 289.5h1M335 289.5h1M341 289.5h1M346 289.5h1M352 289.5h1M357 289.5h1M362 289.5h1M368 289.5h1M373 289.5h1M379 289.5h1M384 289.5h1M777 643.5h5M798 643.5h1M809 643.5h1M841 643.5h3M923 643.5h4M932 643.5h1M221 171.5h1M227 171.5h1M232 171.5h1M238 171.5h1M243 171.5h1M249 171.5h1M254 171.5h1M267 171.5h29M297 171.5h4M303 171.5h8M326 171.5h1M331 171.5h1M600 171.5h6M608 171.5h5M622 171.5h5M629 171.5h5M636 171.5h1M294 186.5h1M305 186.5h1M609 186.5h2M612 186.5h1M624 186.5h1M627 186.5h1M222 165.5h1M227 165.5h1M233 165.5h1M238 165.5h1M244 165.5h1M249 165.5h1M325 165.5h1M330 165.5h1M758 587.5h195M233 474.5h8M219 135.5h1M230 135.5h1M236 135.5h1M241 135.5h1M303 135.5h1M613 135.5h5M619 135.5h5M222 181.5h1M228 181.5h1M233 181.5h1M239 181.5h1M244 181.5h1M249 181.5h1M295 181.5h1M305 181.5h1M608 181.5h2M627 181.5h2M762 530.5h1M769 530.5h5M776 530.5h1M783 530.5h1M791 530.5h3M796 530.5h1M812 530.5h1M816 530.5h1M828 530.5h8M890 530.5h1M294 191.5h1M305 191.5h1M177 310.5h1M276 310.5h1M775 592.5h1M805 592.5h1M811 592.5h4M819 592.5h1M822 592.5h2M828 592.5h12M861 592.5h1M885 592.5h1M891 592.5h1M758 541.5h195M184 490.5h1M292 490.5h1M295 490.5h2M302 490.5h2M306 490.5h1M391 490.5h1M775 531.5h1M783 531.5h2M795 531.5h1M812 531.5h1M815 531.5h1M826 531.5h4M833 531.5h1M885 531.5h1M891 531.5h1M175 315.5h1M274 315.5h1M565 315.5h53M619 315.5h53M751 315.5h2M763 315.5h1M785 315.5h3M793 315.5h2M800 315.5h5M807 315.5h5M821 315.5h4M830 315.5h3M838 315.5h1M845 315.5h2M852 315.5h3M859 315.5h6M868 315.5h4M875 315.5h3M883 315.5h12M221 130.5h1M227 130.5h1M238 130.5h1M254 130.5h1M260 130.5h1M265 130.5h1M271 130.5h1M276 130.5h1M282 130.5h1M287 130.5h1M303 130.5h1M768 593.5h1M772 593.5h3M790 593.5h2M794 593.5h1M804 593.5h4M809 593.5h1M816 593.5h1M826 593.5h2M830 593.5h10M860 593.5h3M885 593.5h1M889 593.5h3M294 197.5h1M305 197.5h1M610 197.5h1M164 479.5h15M180 479.5h3M273 479.5h8M393 479.5h3M397 479.5h16M41 670.5h912M856 649.5h3M862 649.5h1M864 649.5h4M880 649.5h1M890 649.5h3M806 295.5h4M814 295.5h2M822 295.5h5M765 639.5h1M776 639.5h1M792 639.5h1M798 639.5h1M804 639.5h1M811 639.5h1M822 639.5h1M843 639.5h1M913 639.5h1M921 639.5h1M926 639.5h1M932 639.5h2M937 639.5h4M218 243.5h1M223 243.5h1M229 243.5h1M234 243.5h1M240 243.5h1M245 243.5h1M251 243.5h1M307 243.5h1M777 644.5h2M798 644.5h1M803 644.5h1M824 644.5h1M843 644.5h1M854 644.5h6M877 644.5h2M890 644.5h1M923 644.5h4M930 644.5h1M937 644.5h1M758 609.5h195M295 203.5h1M306 203.5h1M605 203.5h1M613 203.5h2M622 203.5h2M630 203.5h2M219 141.5h1M230 141.5h1M235 141.5h1M241 141.5h1M274 141.5h1M616 141.5h2M619 141.5h2M218 136.5h1M221 136.5h1M229 136.5h1M235 136.5h1M240 136.5h1M294 136.5h5M300 136.5h5M613 136.5h11M911 598.5h19M811 546.5h1M814 546.5h10M826 546.5h1M885 546.5h2M891 546.5h1M749 322.5h5M760 322.5h6M779 322.5h1M783 322.5h5M812 322.5h1M820 322.5h3M833 322.5h6M841 322.5h6M853 322.5h1M859 322.5h3M868 322.5h1M872 322.5h3M899 322.5h6M167 316.5h2M174 316.5h1M203 316.5h1M236 316.5h1M268 316.5h1M273 316.5h1M309 316.5h1M566 316.5h3M668 316.5h3M750 316.5h1M760 316.5h6M776 316.5h5M785 316.5h3M793 316.5h2M809 316.5h3M821 316.5h4M830 316.5h12M843 316.5h7M852 316.5h3M859 316.5h4M866 316.5h6M875 316.5h3M883 316.5h10M761 547.5h1M811 547.5h4M821 547.5h6M889 547.5h3M220 214.5h1M225 214.5h1M236 214.5h1M242 214.5h1M247 214.5h1M252 214.5h1M295 214.5h1M306 214.5h1M321 214.5h1M599 214.5h2M636 214.5h2M221 485.5h2M226 485.5h2M246 485.5h2M251 485.5h2M336 485.5h26M384 485.5h1M811 553.5h22M885 553.5h2M891 553.5h1M164 500.5h15M180 500.5h2M294 500.5h1M304 500.5h1M394 500.5h2M397 500.5h16M750 327.5h3M762 327.5h10M779 327.5h1M783 327.5h5M792 327.5h4M804 327.5h12M820 327.5h3M826 327.5h6M835 327.5h3M849 327.5h2M852 327.5h2M861 327.5h1M865 327.5h1M868 327.5h1M872 327.5h5M881 327.5h3M897 327.5h1M901 327.5h4M907 327.5h5M208 106.5h1M259 106.5h48M313 106.5h1M218 153.5h1M223 153.5h1M229 153.5h1M234 153.5h1M239 153.5h1M245 153.5h1M250 153.5h1M185 496.5h1M256 496.5h1M259 496.5h4M265 496.5h4M271 496.5h4M291 496.5h1M297 496.5h1M301 496.5h1M811 563.5h16M758 564.5h195M760 604.5h5M776 604.5h6M823 604.5h4M878 604.5h4M891 604.5h6M936 604.5h3M945 604.5h4M219 209.5h1M225 209.5h1M230 209.5h1M236 209.5h1M241 209.5h1M247 209.5h1M252 209.5h1M295 209.5h1M306 209.5h1M595 209.5h1M615 209.5h2M620 209.5h2M641 209.5h1M177 311.5h1M276 311.5h1M609 311.5h1M613 311.5h1M235 198.5h1M295 198.5h1M306 198.5h1M347 198.5h1M608 198.5h1M610 198.5h1M626 198.5h1M628 198.5h1M220 225.5h1M225 225.5h1M231 225.5h1M236 225.5h1M241 225.5h1M247 225.5h1M252 225.5h1M321 225.5h14M607 225.5h5M625 225.5h6M188 291.5h1M192 291.5h1M197 291.5h1M203 291.5h1M208 291.5h1M214 291.5h1M219 291.5h1M224 291.5h1M230 291.5h1M235 291.5h1M246 291.5h1M252 291.5h1M257 291.5h1M262 291.5h1M268 291.5h1M273 291.5h1M279 291.5h1M284 291.5h1M290 291.5h1M295 291.5h1M301 291.5h1M306 291.5h1M311 291.5h1M317 291.5h1M322 291.5h1M328 291.5h1M333 291.5h1M339 291.5h1M344 291.5h1M350 291.5h1M355 291.5h1M360 291.5h1M366 291.5h1M371 291.5h1M377 291.5h1M382 291.5h1M388 291.5h1M765 333.5h1M783 333.5h5M792 333.5h3M799 333.5h2M806 333.5h4M821 333.5h3M828 333.5h2M764 665.5h4M920 665.5h1M926 665.5h1M811 569.5h16M889 569.5h3M762 328.5h4M773 328.5h7M784 328.5h4M792 328.5h4M804 328.5h1M810 328.5h6M826 328.5h8M836 328.5h11M849 328.5h5M859 328.5h10M872 328.5h3M883 328.5h3M897 328.5h8M907 328.5h5M191 286.5h1M197 286.5h1M202 286.5h1M208 286.5h1M213 286.5h1M219 286.5h1M224 286.5h1M229 286.5h1M235 286.5h1M240 286.5h1M246 286.5h1M251 286.5h1M257 286.5h1M262 286.5h1M267 286.5h1M273 286.5h1M278 286.5h1M284 286.5h1M289 286.5h1M295 286.5h1M300 286.5h1M306 286.5h1M311 286.5h1M316 286.5h1M327 286.5h1M333 286.5h1M338 286.5h1M344 286.5h1M349 286.5h1M355 286.5h1M360 286.5h1M365 286.5h1M371 286.5h1M376 286.5h1M382 286.5h1M387 286.5h1M191 281.5h1M194 281.5h1M196 281.5h1M202 281.5h1M207 281.5h1M213 281.5h1M218 281.5h1M224 281.5h1M229 281.5h1M234 281.5h1M240 281.5h1M245 281.5h1M251 281.5h1M256 281.5h1M262 281.5h1M267 281.5h1M272 281.5h1M278 281.5h1M283 281.5h1M290 281.5h1M294 281.5h1M300 281.5h1M305 281.5h1M311 281.5h1M316 281.5h1M321 281.5h1M327 281.5h1M332 281.5h1M338 281.5h1M343 281.5h1M349 281.5h1M354 281.5h1M360 281.5h1M365 281.5h1M370 281.5h1M376 281.5h1M381 281.5h1M387 281.5h1M856 666.5h2M866 666.5h1M876 666.5h1M199 512.5h18M247 512.5h2M250 512.5h5M336 512.5h19M911 615.5h1M914 615.5h4M921 615.5h2M927 615.5h1M137 117.5h171M611 117.5h7M619 117.5h7M220 219.5h1M226 219.5h1M231 219.5h1M237 219.5h1M242 219.5h1M247 219.5h1M253 219.5h1M318 219.5h1M597 219.5h1M639 219.5h1M190 287.5h2M196 287.5h1M201 287.5h1M207 287.5h1M212 287.5h1M218 287.5h1M223 287.5h1M228 287.5h1M234 287.5h1M239 287.5h1M245 287.5h1M250 287.5h1M256 287.5h1M261 287.5h1M266 287.5h1M272 287.5h1M277 287.5h1M283 287.5h1M288 287.5h1M294 287.5h1M299 287.5h1M305 287.5h1M310 287.5h1M315 287.5h1M321 287.5h1M326 287.5h1M332 287.5h1M337 287.5h1M343 287.5h1M348 287.5h1M354 287.5h1M359 287.5h1M364 287.5h1M370 287.5h1M375 287.5h1M381 287.5h1M386 287.5h1M205 101.5h4M216 101.5h1M225 101.5h1M233 101.5h1M264 101.5h1M281 101.5h1M317 101.5h1M274 574.5h9M761 574.5h2M811 574.5h16M860 574.5h1M889 574.5h3M218 472.5h7M266 472.5h46M762 323.5h12M779 323.5h1M783 323.5h5M804 323.5h1M810 323.5h5M820 323.5h3M835 323.5h3M842 323.5h2M849 323.5h5M859 323.5h2M865 323.5h4M872 323.5h3M881 323.5h1M892 323.5h6M901 323.5h4M910 323.5h2M611 118.5h7M619 118.5h7M320 461.5h15M762 338.5h4M771 338.5h5M781 338.5h1M786 338.5h2M790 338.5h2M799 338.5h4M804 338.5h1M810 338.5h1M812 338.5h12M826 338.5h6M751 343.5h1M763 343.5h3M770 343.5h4M776 343.5h6M785 343.5h4M793 343.5h8M811 343.5h1M822 343.5h5M831 343.5h4M844 343.5h6M853 343.5h3M859 343.5h7M868 343.5h12M750 344.5h1M763 344.5h3M770 344.5h4M781 344.5h1M785 344.5h4M793 344.5h10M811 344.5h1M818 344.5h2M822 344.5h3M831 344.5h4M849 344.5h1M853 344.5h5M860 344.5h5M870 344.5h10M798 637.5h1M804 637.5h1M822 637.5h1M828 637.5h1M835 637.5h1M220 241.5h1M231 241.5h1M236 241.5h1M242 241.5h1M247 241.5h1M253 241.5h1M308 241.5h1M762 529.5h1M777 529.5h1M784 529.5h1M787 529.5h1M794 529.5h1M797 529.5h1M815 529.5h1M817 529.5h1M826 529.5h5M835 529.5h1M860 529.5h1M889 529.5h3M811 570.5h16M781 647.5h1M785 647.5h1M798 647.5h1M803 647.5h1M824 647.5h2M833 647.5h1M843 647.5h1M877 647.5h2M293 190.5h1M304 190.5h1M188 292.5h1M191 292.5h1M196 292.5h1M202 292.5h1M207 292.5h1M218 292.5h1M223 292.5h1M229 292.5h1M234 292.5h1M245 292.5h1M251 292.5h1M256 292.5h1M261 292.5h1M267 292.5h1M272 292.5h1M278 292.5h1M283 292.5h1M289 292.5h1M294 292.5h1M300 292.5h1M305 292.5h1M310 292.5h1M316 292.5h1M327 292.5h1M332 292.5h1M338 292.5h1M343 292.5h1M349 292.5h1M354 292.5h1M359 292.5h1M365 292.5h1M370 292.5h1M376 292.5h1M381 292.5h1M387 292.5h1M219 179.5h1M224 179.5h1M230 179.5h1M235 179.5h1M241 179.5h1M246 179.5h1M251 179.5h1M293 179.5h1M303 179.5h1M323 179.5h1M328 179.5h1M334 179.5h1M593 179.5h2M612 179.5h2M623 179.5h2M642 179.5h2M761 590.5h1M776 590.5h1M782 590.5h1M786 590.5h1M797 590.5h1M804 590.5h1M807 590.5h1M811 590.5h4M823 590.5h1M830 590.5h10M860 590.5h3M889 590.5h3M221 133.5h1M227 133.5h1M232 133.5h1M238 133.5h1M243 133.5h1M254 133.5h1M758 534.5h195M184 298.5h1M282 298.5h1M804 298.5h6M814 298.5h2M822 298.5h3M768 591.5h1M772 591.5h1M775 591.5h2M790 591.5h2M801 591.5h3M806 591.5h1M811 591.5h9M822 591.5h1M826 591.5h14M862 591.5h1M890 591.5h1M220 252.5h1M225 252.5h1M231 252.5h1M236 252.5h1M242 252.5h1M253 252.5h1M231 128.5h1M236 128.5h1M242 128.5h1M258 128.5h1M263 128.5h1M269 128.5h1M274 128.5h1M280 128.5h1M285 128.5h1M291 128.5h1M307 128.5h1M761 642.5h1M772 642.5h1M788 642.5h1M805 642.5h1M809 642.5h1M833 642.5h1M932 642.5h2M220 236.5h1M230 236.5h1M236 236.5h1M241 236.5h1M247 236.5h1M252 236.5h1M310 236.5h1M220 145.5h2M231 145.5h1M237 145.5h1M242 145.5h1M247 145.5h1M253 145.5h1M761 585.5h3M768 585.5h1M772 585.5h3M790 585.5h2M794 585.5h1M804 585.5h4M809 585.5h1M813 585.5h1M817 585.5h1M860 585.5h3M886 585.5h1M890 585.5h2M182 488.5h2M294 488.5h1M304 488.5h1M392 488.5h2M768 581.5h1M772 581.5h1M777 581.5h5M790 581.5h2M805 581.5h2M809 581.5h1M813 581.5h1M817 581.5h1M232 144.5h1M238 144.5h1M243 144.5h1M248 144.5h1M254 144.5h21M616 144.5h2M619 144.5h2M856 648.5h1M864 648.5h4M877 648.5h2M894 648.5h3M221 150.5h1M226 150.5h1M232 150.5h1M237 150.5h1M242 150.5h1M248 150.5h1M253 150.5h1M266 150.5h1M189 505.5h8M302 505.5h5M313 505.5h4M356 505.5h6M386 505.5h1M218 248.5h1M224 248.5h1M229 248.5h1M235 248.5h1M240 248.5h1M246 248.5h1M251 248.5h1M305 248.5h1M223 222.5h1M228 222.5h1M234 222.5h1M239 222.5h1M244 222.5h1M250 222.5h1M317 222.5h1M602 222.5h1M634 222.5h1M763 658.5h1M929 658.5h1M220 208.5h1M226 208.5h1M231 208.5h1M237 208.5h1M242 208.5h1M248 208.5h1M253 208.5h1M294 208.5h1M305 208.5h1M594 208.5h1M614 208.5h1M622 208.5h1M642 208.5h1M268 105.5h2M283 105.5h1M287 105.5h1M296 105.5h1M301 105.5h1M314 105.5h1M136 207.5h2M221 207.5h1M227 207.5h1M238 207.5h1M243 207.5h1M249 207.5h1M293 207.5h1M304 207.5h1M593 207.5h2M612 207.5h2M623 207.5h2M642 207.5h2M758 608.5h1M765 608.5h1M776 608.5h1M792 608.5h1M821 608.5h6M840 608.5h4M858 608.5h4M876 608.5h7M891 608.5h2M896 608.5h1M908 608.5h23M934 608.5h3M220 140.5h2M231 140.5h1M236 140.5h1M242 140.5h1M256 140.5h19M616 140.5h5M908 618.5h4M914 618.5h6M922 618.5h1M929 618.5h6M936 618.5h1M187 274.5h1M192 274.5h1M198 274.5h1M203 274.5h1M209 274.5h1M214 274.5h1M220 274.5h1M225 274.5h1M231 274.5h1M236 274.5h1M241 274.5h1M247 274.5h1M252 274.5h1M258 274.5h1M263 274.5h1M269 274.5h1M274 274.5h1M279 274.5h1M285 274.5h1M290 274.5h1M293 274.5h1M296 274.5h1M301 274.5h1M307 274.5h1M312 274.5h1M318 274.5h1M323 274.5h1M328 274.5h1M334 274.5h1M339 274.5h1M345 274.5h1M350 274.5h1M356 274.5h1M361 274.5h1M367 274.5h1M372 274.5h1M377 274.5h1M383 274.5h1M388 274.5h1M221 213.5h1M226 213.5h1M232 213.5h1M237 213.5h1M243 213.5h1M248 213.5h1M294 213.5h1M305 213.5h1M321 213.5h1M205 100.5h1M209 100.5h1M211 100.5h1M226 100.5h1M268 100.5h2M275 100.5h2M281 100.5h1M287 100.5h1M318 100.5h1M187 269.5h1M192 269.5h1M197 269.5h1M203 269.5h1M208 269.5h1M214 269.5h1M219 269.5h1M225 269.5h1M230 269.5h1M236 269.5h1M241 269.5h1M246 269.5h1M252 269.5h1M257 269.5h1M263 269.5h1M268 269.5h1M274 269.5h1M279 269.5h1M284 269.5h1M290 269.5h1M295 269.5h1M301 269.5h1M306 269.5h1M312 269.5h1M317 269.5h1M323 269.5h1M328 269.5h1M333 269.5h1M339 269.5h1M344 269.5h1M350 269.5h1M355 269.5h1M361 269.5h1M366 269.5h1M372 269.5h1M377 269.5h1M382 269.5h1M388 269.5h1M188 284.5h1M192 284.5h1M199 284.5h1M204 284.5h1M210 284.5h1M221 284.5h1M226 284.5h1M231 284.5h1M237 284.5h1M248 284.5h1M253 284.5h1M259 284.5h1M264 284.5h1M269 284.5h1M275 284.5h1M280 284.5h1M286 284.5h1M288 284.5h1M291 284.5h1M297 284.5h1M302 284.5h1M308 284.5h1M313 284.5h1M318 284.5h1M324 284.5h1M329 284.5h1M335 284.5h1M340 284.5h1M346 284.5h1M351 284.5h1M357 284.5h1M362 284.5h1M367 284.5h1M373 284.5h1M378 284.5h1M384 284.5h1M389 284.5h1M762 337.5h4M771 337.5h9M782 337.5h6M790 337.5h5M799 337.5h2M806 337.5h3M815 337.5h3M821 337.5h5M828 337.5h2M221 218.5h1M227 218.5h1M232 218.5h1M238 218.5h1M243 218.5h1M248 218.5h1M254 218.5h1M319 218.5h1M216 121.5h1M235 121.5h1M240 121.5h1M245 121.5h1M256 121.5h1M262 121.5h1M267 121.5h1M273 121.5h1M278 121.5h1M284 121.5h1M289 121.5h1M294 121.5h1M221 166.5h1M226 166.5h1M232 166.5h1M237 166.5h1M243 166.5h1M248 166.5h1M254 166.5h1M321 166.5h1M326 166.5h1M331 166.5h1M597 166.5h1M639 166.5h1M811 578.5h16M911 630.5h1M913 630.5h1M916 630.5h3M923 630.5h2M927 630.5h1M935 630.5h8M761 568.5h3M811 568.5h16M885 568.5h2M891 568.5h1M221 229.5h1M232 229.5h1M237 229.5h1M243 229.5h1M248 229.5h1M254 229.5h1M314 229.5h1M220 178.5h1M225 178.5h1M231 178.5h1M236 178.5h1M242 178.5h1M247 178.5h1M252 178.5h1M292 178.5h1M322 178.5h1M327 178.5h1M333 178.5h1M594 178.5h1M614 178.5h1M622 178.5h1M642 178.5h1M219 157.5h1M225 157.5h1M230 157.5h1M235 157.5h1M241 157.5h1M246 157.5h1M252 157.5h1M758 579.5h195M218 516.5h6M266 516.5h46M199 476.5h18M249 476.5h8M336 476.5h19M605 183.5h2M613 183.5h2M622 183.5h2M630 183.5h2M230 122.5h1M236 122.5h1M241 122.5h1M257 122.5h1M263 122.5h1M268 122.5h1M274 122.5h1M279 122.5h1M285 122.5h1M290 122.5h1M295 122.5h1M306 122.5h1M227 250.5h1M233 250.5h1M238 250.5h1M244 250.5h1M249 250.5h1M304 250.5h1M292 189.5h1M303 189.5h1M610 189.5h1M777 646.5h5M798 646.5h1M819 646.5h1M837 646.5h1M843 646.5h1M883 646.5h1M894 646.5h1M826 533.5h8M230 127.5h1M235 127.5h1M241 127.5h1M257 127.5h1M262 127.5h1M268 127.5h1M273 127.5h1M279 127.5h1M284 127.5h1M290 127.5h1M295 127.5h1M306 127.5h1M763 348.5h3M768 348.5h3M773 348.5h1M776 348.5h6M798 348.5h1M804 348.5h1M808 348.5h4M819 348.5h4M827 348.5h1M829 348.5h1M834 348.5h9M847 348.5h3M853 348.5h12M868 348.5h12M256 492.5h3M261 492.5h4M267 492.5h4M273 492.5h2M291 492.5h1M297 492.5h1M301 492.5h1M347 199.5h1M608 199.5h1M611 199.5h1M625 199.5h1M628 199.5h1M762 539.5h1M811 539.5h11M889 539.5h3M185 297.5h1M282 297.5h1M798 297.5h5M804 297.5h7M812 297.5h6M822 297.5h3M182 302.5h1M280 302.5h1M913 641.5h1M920 641.5h4M932 641.5h2M292 195.5h1M303 195.5h1M221 245.5h1M227 245.5h1M232 245.5h1M238 245.5h1M243 245.5h1M249 245.5h1M254 245.5h1M306 245.5h1M164 487.5h18M295 487.5h2M302 487.5h2M383 487.5h1M394 487.5h19M164 267.5h31M199 267.5h1M205 267.5h1M210 267.5h1M216 267.5h1M221 267.5h1M227 267.5h1M232 267.5h1M238 267.5h1M243 267.5h1M248 267.5h1M254 267.5h1M259 267.5h1M265 267.5h1M270 267.5h1M276 267.5h1M281 267.5h1M286 267.5h1M292 267.5h1M296 267.5h1M303 267.5h1M308 267.5h1M314 267.5h1M319 267.5h1M325 267.5h1M330 267.5h1M335 267.5h1M341 267.5h1M346 267.5h1M352 267.5h1M357 267.5h1M363 267.5h1M368 267.5h1M374 267.5h1M379 267.5h1M382 267.5h31M604 267.5h29M188 482.5h1M221 482.5h1M227 482.5h1M246 482.5h1M252 482.5h1M297 482.5h8M387 482.5h1M179 308.5h1M277 308.5h1M776 601.5h6M792 601.5h7M823 601.5h4M838 601.5h4M858 601.5h4M891 601.5h6M909 601.5h3M915 601.5h5M923 601.5h7M936 601.5h3M943 601.5h3M811 555.5h22M199 211.5h18M223 211.5h1M228 211.5h1M234 211.5h1M239 211.5h1M245 211.5h1M250 211.5h1M292 211.5h1M303 211.5h1M336 211.5h19M596 211.5h2M639 211.5h2M209 108.5h1M312 108.5h1M221 155.5h1M227 155.5h1M232 155.5h1M237 155.5h1M243 155.5h1M248 155.5h1M254 155.5h1M266 155.5h1M811 566.5h16M860 566.5h1M889 566.5h3M222 160.5h1M227 160.5h1M232 160.5h1M238 160.5h1M243 160.5h1M249 160.5h1M254 160.5h1M321 160.5h14M609 160.5h6M616 160.5h2M619 160.5h2M622 160.5h6M885 329.5h1M867 622.5h2M880 622.5h2M762 324.5h1M767 324.5h13M783 324.5h4M804 324.5h1M810 324.5h7M826 324.5h6M833 324.5h5M849 324.5h5M865 324.5h4M872 324.5h3M878 324.5h6M895 324.5h3M901 324.5h4M908 324.5h4M807 668.5h1M857 668.5h1M886 668.5h1M218 232.5h1M224 232.5h1M229 232.5h1M234 232.5h1M240 232.5h1M245 232.5h1M251 232.5h1M312 232.5h1M199 175.5h18M223 175.5h1M228 175.5h1M234 175.5h1M239 175.5h1M245 175.5h1M250 175.5h1M294 175.5h1M305 175.5h1M324 175.5h1M330 175.5h1M336 175.5h19M596 175.5h2M639 175.5h2M911 612.5h1M927 612.5h3M936 612.5h5M212 114.5h1M307 114.5h1M813 561.5h3M818 561.5h1M822 561.5h1M825 561.5h2M881 561.5h1M888 561.5h1M763 346.5h3M770 346.5h1M793 346.5h10M808 346.5h4M818 346.5h1M822 346.5h3M831 346.5h9M847 346.5h3M853 346.5h3M862 346.5h1M874 346.5h6M776 634.5h1M785 634.5h1M791 634.5h2M818 634.5h1M828 634.5h1M838 634.5h1M843 634.5h1M218 254.5h1M223 254.5h1M229 254.5h1M234 254.5h1M240 254.5h1M245 254.5h1M251 254.5h1M302 254.5h1M184 299.5h1M281 299.5h1M812 299.5h6M820 299.5h1M823 299.5h4M762 536.5h1M811 536.5h11M860 536.5h1M889 536.5h3M218 238.5h1M223 238.5h1M228 238.5h1M234 238.5h1M239 238.5h1M245 238.5h1M250 238.5h1M219 146.5h1M221 146.5h1M225 146.5h1M230 146.5h1M236 146.5h1M241 146.5h1M246 146.5h1M252 146.5h1M761 660.5h3M845 660.5h54M922 660.5h1M909 599.5h1M912 599.5h1M915 599.5h1M923 599.5h6M295 192.5h1M306 192.5h1M218 147.5h1M223 147.5h1M225 147.5h1M229 147.5h1M235 147.5h1M240 147.5h1M245 147.5h1M251 147.5h1M762 559.5h1M811 559.5h2M817 559.5h1M820 559.5h1M824 559.5h3M860 559.5h1M883 559.5h7M891 559.5h2M895 559.5h1M136 210.5h4M198 210.5h1M218 210.5h1M224 210.5h1M229 210.5h1M235 210.5h1M240 210.5h1M246 210.5h1M251 210.5h1M354 210.5h1M595 210.5h1M617 210.5h1M619 210.5h1M641 210.5h1M878 621.5h4M186 507.5h2M221 507.5h2M226 507.5h2M246 507.5h2M251 507.5h2M286 507.5h8M388 507.5h2M218 158.5h1M224 158.5h1M229 158.5h1M234 158.5h1M240 158.5h1M245 158.5h1M251 158.5h1M218 174.5h1M224 174.5h1M229 174.5h1M235 174.5h1M240 174.5h1M246 174.5h1M251 174.5h1M293 174.5h1M304 174.5h1M323 174.5h1M329 174.5h1M334 174.5h1M597 174.5h1M639 174.5h1M219 220.5h1M225 220.5h1M236 220.5h1M241 220.5h1M246 220.5h1M318 220.5h1M597 220.5h1M639 220.5h1M239 513.5h8M900 632.5h53M190 282.5h1M195 282.5h1M201 282.5h1M206 282.5h1M212 282.5h1M217 282.5h1M223 282.5h1M228 282.5h1M233 282.5h1M239 282.5h1M244 282.5h1M250 282.5h1M255 282.5h1M261 282.5h1M266 282.5h1M271 282.5h1M277 282.5h1M282 282.5h1M288 282.5h1M293 282.5h1M299 282.5h1M304 282.5h1M310 282.5h1M315 282.5h1M320 282.5h1M326 282.5h1M331 282.5h1M337 282.5h1M342 282.5h1M348 282.5h1M353 282.5h1M359 282.5h1M364 282.5h1M369 282.5h1M375 282.5h1M380 282.5h1M386 282.5h1M218 180.5h1M223 180.5h1M229 180.5h1M234 180.5h1M240 180.5h1M245 180.5h1M250 180.5h1M294 180.5h1M304 180.5h1M324 180.5h1M329 180.5h1M593 180.5h1M610 180.5h2M625 180.5h2M643 180.5h1M231 123.5h1M237 123.5h1M242 123.5h1M253 123.5h1M258 123.5h1M269 123.5h1M275 123.5h1M280 123.5h1M286 123.5h1M291 123.5h1M307 123.5h1M749 345.5h5M760 345.5h6M770 345.5h1M793 345.5h1M798 345.5h7M808 345.5h4M822 345.5h3M831 345.5h4M839 345.5h1M844 345.5h6M853 345.5h3M862 345.5h1M874 345.5h3M232 129.5h1M237 129.5h1M243 129.5h1M253 129.5h1M259 129.5h1M264 129.5h1M270 129.5h1M275 129.5h1M281 129.5h1M286 129.5h1M292 129.5h1M293 185.5h1M304 185.5h1M610 185.5h1M613 185.5h2M622 185.5h2M626 185.5h1M232 124.5h1M238 124.5h1M243 124.5h1M254 124.5h1M259 124.5h1M265 124.5h1M270 124.5h1M276 124.5h1M281 124.5h1M287 124.5h1M292 124.5h1M303 124.5h1M178 309.5h1M277 309.5h1M184 489.5h1M293 489.5h1M296 489.5h3M300 489.5h3M305 489.5h1M391 489.5h1M219 247.5h1M225 247.5h1M230 247.5h1M236 247.5h1M241 247.5h1M252 247.5h1M305 247.5h1M138 201.5h1M293 201.5h1M304 201.5h1M613 201.5h2M622 201.5h2M761 664.5h2M920 664.5h1M197 264.5h1M202 264.5h1M208 264.5h1M213 264.5h1M224 264.5h1M230 264.5h1M235 264.5h1M241 264.5h1M246 264.5h1M251 264.5h1M257 264.5h1M262 264.5h1M268 264.5h1M273 264.5h1M279 264.5h1M284 264.5h1M289 264.5h1M295 264.5h1M300 264.5h1M306 264.5h1M311 264.5h1M317 264.5h1M322 264.5h1M333 264.5h1M338 264.5h1M344 264.5h1M349 264.5h1M355 264.5h1M360 264.5h1M366 264.5h1M371 264.5h1M377 264.5h1M196 265.5h1M201 265.5h1M207 265.5h1M212 265.5h1M218 265.5h1M223 265.5h1M229 265.5h1M234 265.5h1M240 265.5h1M250 265.5h1M256 265.5h1M261 265.5h1M267 265.5h1M272 265.5h1M278 265.5h1M283 265.5h1M288 265.5h1M294 265.5h1M299 265.5h1M305 265.5h1M310 265.5h1M316 265.5h1M321 265.5h1M327 265.5h1M332 265.5h1M337 265.5h1M343 265.5h1M348 265.5h1M354 265.5h1M359 265.5h1M365 265.5h1M370 265.5h1M376 265.5h1M758 603.5h8M794 603.5h5M821 603.5h6M878 603.5h4M891 603.5h2M936 603.5h3M942 603.5h4M218 259.5h1M224 259.5h1M229 259.5h1M235 259.5h1M240 259.5h1M251 259.5h1M256 259.5h2M300 259.5h1M908 614.5h4M914 614.5h9M925 614.5h3M944 614.5h1M191 270.5h1M196 270.5h1M202 270.5h1M207 270.5h1M213 270.5h1M224 270.5h1M229 270.5h1M235 270.5h1M240 270.5h1M245 270.5h1M251 270.5h1M256 270.5h1M262 270.5h1M267 270.5h1M273 270.5h1M278 270.5h1M283 270.5h1M289 270.5h1M295 270.5h1M300 270.5h1M305 270.5h1M311 270.5h1M316 270.5h1M322 270.5h1M332 270.5h1M338 270.5h1M343 270.5h1M349 270.5h1M354 270.5h1M360 270.5h1M365 270.5h1M371 270.5h1M376 270.5h1M381 270.5h1M387 270.5h1M221 224.5h1M226 224.5h1M232 224.5h1M237 224.5h1M242 224.5h1M248 224.5h1M253 224.5h1M316 224.5h1M604 224.5h4M630 224.5h3M219 173.5h1M225 173.5h1M230 173.5h1M236 173.5h1M241 173.5h1M247 173.5h1M252 173.5h1M292 173.5h1M303 173.5h1M322 173.5h1M328 173.5h1M333 173.5h1M219 168.5h1M224 168.5h1M230 168.5h1M235 168.5h1M241 168.5h1M246 168.5h1M252 168.5h1M323 168.5h1M328 168.5h1M333 168.5h1M192 280.5h1M195 280.5h1M197 280.5h1M203 280.5h1M208 280.5h1M214 280.5h1M219 280.5h1M225 280.5h1M230 280.5h1M235 280.5h1M241 280.5h1M246 280.5h1M252 280.5h1M257 280.5h1M263 280.5h1M268 280.5h1M273 280.5h1M279 280.5h1M284 280.5h1M290 280.5h1M295 280.5h1M301 280.5h1M306 280.5h1M312 280.5h1M317 280.5h1M322 280.5h1M328 280.5h1M333 280.5h1M339 280.5h1M344 280.5h1M350 280.5h1M355 280.5h1M361 280.5h1M366 280.5h1M371 280.5h1M377 280.5h1M382 280.5h1M388 280.5h1M759 635.5h1M765 635.5h1M772 635.5h1M798 635.5h1M811 635.5h1M828 635.5h1M838 635.5h1M220 162.5h1M225 162.5h1M230 162.5h1M236 162.5h1M241 162.5h1M247 162.5h1M252 162.5h1M322 162.5h1M327 162.5h1M333 162.5h1M604 162.5h4M629 162.5h4M770 332.5h3M782 332.5h6M790 332.5h5M812 332.5h6M821 332.5h12M221 235.5h1M231 235.5h1M237 235.5h1M242 235.5h1M248 235.5h1M253 235.5h1M311 235.5h1M256 460.5h10M192 184.5h24M292 184.5h1M303 184.5h1M329 184.5h33M604 184.5h1M611 184.5h2M615 184.5h3M619 184.5h3M624 184.5h2M632 184.5h1M863 625.5h1M867 625.5h1M880 625.5h2M916 625.5h3M923 625.5h2M927 625.5h3M939 625.5h2M776 636.5h1M798 636.5h1M828 636.5h1M228 132.5h1M239 132.5h1M295 132.5h1M227 256.5h1M232 256.5h1M238 256.5h1M243 256.5h1M249 256.5h1M254 256.5h1M301 256.5h1M811 538.5h11M885 538.5h2M891 538.5h1M292 200.5h1M303 200.5h1M609 200.5h2M612 200.5h1M624 200.5h1M627 200.5h1M179 307.5h1M278 307.5h1M223 148.5h1M228 148.5h1M234 148.5h1M239 148.5h1M244 148.5h1M250 148.5h1M199 262.5h1M204 262.5h1M210 262.5h1M215 262.5h1M221 262.5h1M226 262.5h1M232 262.5h1M237 262.5h1M243 262.5h1M248 262.5h1M253 262.5h1M259 262.5h1M264 262.5h1M270 262.5h1M275 262.5h1M281 262.5h1M286 262.5h1M291 262.5h1M297 262.5h1M302 262.5h1M308 262.5h1M313 262.5h1M319 262.5h1M324 262.5h1M330 262.5h1M335 262.5h1M340 262.5h1M346 262.5h1M351 262.5h1M357 262.5h1M362 262.5h1M368 262.5h1M373 262.5h1M379 262.5h1M184 498.5h1M292 498.5h1M295 498.5h2M302 498.5h2M306 498.5h1M391 498.5h1M220 257.5h1M226 257.5h1M231 257.5h1M237 257.5h1M242 257.5h1M248 257.5h1M253 257.5h1M301 257.5h1M911 617.5h1M914 617.5h9M927 617.5h3M936 617.5h1M942 617.5h3M862 623.5h4M880 623.5h2M224 515.5h8M295 187.5h1M306 187.5h1M608 187.5h1M611 187.5h1M625 187.5h1M628 187.5h1M228 255.5h1M233 255.5h1M239 255.5h1M244 255.5h1M250 255.5h1M302 255.5h1M228 249.5h1M234 249.5h1M239 249.5h1M245 249.5h1M250 249.5h1M304 249.5h1M223 260.5h1M228 260.5h1M234 260.5h1M239 260.5h1M250 260.5h1M258 260.5h2M299 260.5h1M254 96.5h1M256 96.5h1M271 96.5h1M323 96.5h1M243 102.5h1M255 102.5h1M272 102.5h2M280 102.5h1M283 102.5h1M287 102.5h1M316 102.5h1M183 508.5h3M222 508.5h2M225 508.5h2M247 508.5h2M250 508.5h2M279 508.5h7M390 508.5h3M225 473.5h8M219 242.5h1M230 242.5h1M235 242.5h1M241 242.5h1M246 242.5h1M252 242.5h1M308 242.5h1M190 484.5h7M221 484.5h1M227 484.5h1M246 484.5h1M252 484.5h1M385 484.5h1M219 258.5h1M225 258.5h1M230 258.5h1M236 258.5h1M241 258.5h1M247 258.5h1M252 258.5h1M300 258.5h1M223 125.5h1M225 125.5h1M233 125.5h1M239 125.5h1M244 125.5h1M255 125.5h1M260 125.5h1M266 125.5h1M271 125.5h1M277 125.5h1M282 125.5h1M288 125.5h1M304 125.5h1M762 552.5h1M811 552.5h22M886 552.5h1M889 552.5h2M198 511.5h1M256 511.5h7M354 511.5h1M254 95.5h3M270 95.5h2M219 163.5h1M224 163.5h1M229 163.5h1M235 163.5h1M240 163.5h1M246 163.5h1M251 163.5h1M323 163.5h1M328 163.5h1M334 163.5h1M602 163.5h3M632 163.5h3M220 230.5h1M226 230.5h1M231 230.5h1M236 230.5h1M242 230.5h1M247 230.5h1M253 230.5h1M313 230.5h1M221 139.5h1M232 139.5h1M237 139.5h1M243 139.5h1M253 139.5h1M811 545.5h1M813 545.5h2M821 545.5h6M886 545.5h1M889 545.5h2M274 493.5h1M291 493.5h1M296 493.5h1M302 493.5h1M221 251.5h1M226 251.5h1M232 251.5h1M237 251.5h1M243 251.5h1M248 251.5h1M254 251.5h1M210 110.5h1M310 110.5h2M274 572.5h1M276 572.5h1M279 572.5h1M222 228.5h1M233 228.5h1M238 228.5h1M244 228.5h1M249 228.5h1M314 228.5h1M185 296.5h1M798 296.5h5M806 296.5h3M814 296.5h4M822 296.5h5M186 481.5h2M221 481.5h2M226 481.5h2M246 481.5h2M251 481.5h2M289 481.5h8M388 481.5h2M189 277.5h1M195 277.5h1M200 277.5h1M206 277.5h1M211 277.5h1M217 277.5h1M222 277.5h1M228 277.5h1M233 277.5h1M238 277.5h1M244 277.5h1M249 277.5h1M255 277.5h1M260 277.5h1M266 277.5h1M271 277.5h1M276 277.5h1M282 277.5h1M287 277.5h1M293 277.5h1M298 277.5h1M304 277.5h1M309 277.5h1M315 277.5h1M320 277.5h1M331 277.5h1M336 277.5h1M342 277.5h1M347 277.5h1M353 277.5h1M358 277.5h1M364 277.5h1M369 277.5h1M374 277.5h1M380 277.5h1M385 277.5h1M188 273.5h1M193 273.5h1M199 273.5h1M204 273.5h1M210 273.5h1M215 273.5h1M221 273.5h1M226 273.5h1M232 273.5h1M237 273.5h1M242 273.5h1M248 273.5h1M253 273.5h1M259 273.5h1M264 273.5h1M270 273.5h1M275 273.5h1M280 273.5h1M286 273.5h1M291 273.5h1M293 273.5h1M297 273.5h1M302 273.5h1M308 273.5h1M313 273.5h1M319 273.5h1M324 273.5h1M329 273.5h1M335 273.5h1M340 273.5h1M346 273.5h1M351 273.5h1M357 273.5h1M362 273.5h1M368 273.5h1M373 273.5h1M378 273.5h1M384 273.5h1M389 273.5h1M206 97.5h2M216 97.5h2M222 97.5h3M233 97.5h1M322 97.5h2M303 119.5h1M610 119.5h1M626 119.5h1M221 137.5h1M228 137.5h1M234 137.5h1M239 137.5h1M245 137.5h1M191 275.5h1M198 275.5h1M202 275.5h1M208 275.5h1M213 275.5h1M219 275.5h1M224 275.5h1M230 275.5h1M235 275.5h1M240 275.5h1M246 275.5h1M251 275.5h1M257 275.5h1M262 275.5h1M268 275.5h1M273 275.5h1M278 275.5h1M284 275.5h1M289 275.5h1M292 275.5h1M295 275.5h1M300 275.5h1M306 275.5h1M311 275.5h1M317 275.5h1M322 275.5h1M327 275.5h1M333 275.5h1M338 275.5h1M344 275.5h1M349 275.5h1M355 275.5h1M360 275.5h1M366 275.5h1M371 275.5h1M376 275.5h1M382 275.5h1M387 275.5h1M185 495.5h1M274 495.5h1M291 495.5h1M296 495.5h1M302 495.5h1M762 537.5h1M811 537.5h11M886 537.5h1M889 537.5h2M211 112.5h1M308 112.5h1M218 169.5h1M223 169.5h1M229 169.5h1M234 169.5h1M240 169.5h1M245 169.5h1M251 169.5h1M324 169.5h1M329 169.5h1M334 169.5h1M198 477.5h1M257 477.5h8M354 477.5h1M189 483.5h2M305 483.5h2M313 483.5h4M356 483.5h6M386 483.5h1M811 540.5h11M190 504.5h1M221 504.5h1M227 504.5h1M246 504.5h1M252 504.5h1M385 504.5h1M220 167.5h1M225 167.5h1M231 167.5h1M236 167.5h1M242 167.5h1M247 167.5h1M253 167.5h1M322 167.5h1M327 167.5h1M332 167.5h1M597 167.5h1M639 167.5h1M760 657.5h4M209 109.5h1M311 109.5h1M183 300.5h1M281 300.5h1M188 506.5h1M221 506.5h1M227 506.5h1M246 506.5h1M252 506.5h1M294 506.5h8M387 506.5h1M219 152.5h1M224 152.5h1M230 152.5h1M235 152.5h1M240 152.5h1M246 152.5h1M251 152.5h1M219 231.5h1M225 231.5h1M230 231.5h1M235 231.5h1M241 231.5h1M246 231.5h1M252 231.5h1M313 231.5h1M181 304.5h1M813 319.5h1M763 659.5h5M927 659.5h1M220 156.5h1M226 156.5h1M231 156.5h1M236 156.5h1M242 156.5h1M247 156.5h1M253 156.5h1M266 156.5h1M214 116.5h1M221 240.5h1M226 240.5h1M232 240.5h1M237 240.5h1M243 240.5h1M254 240.5h1M222 149.5h1M227 149.5h1M233 149.5h1M238 149.5h1M243 149.5h1M249 149.5h1M254 149.5h1M266 149.5h1M223 233.5h1M228 233.5h1M233 233.5h1M239 233.5h1M244 233.5h1M312 233.5h1M213 115.5h1M180 306.5h1M278 306.5h1M923 600.5h3M927 600.5h1M181 303.5h1M220 134.5h2M227 134.5h1M231 134.5h1M237 134.5h1M242 134.5h1M253 134.5h1M295 501.5h2M302 501.5h2M383 501.5h1M219 253.5h1M224 253.5h1M230 253.5h1M235 253.5h1M241 253.5h1M252 253.5h1M921 663.5h2M222 154.5h1M228 154.5h1M233 154.5h1M238 154.5h1M244 154.5h1M249 154.5h1M180 305.5h1M220 246.5h1M226 246.5h1M231 246.5h1M237 246.5h1M242 246.5h1M253 246.5h1M306 246.5h1M263 510.5h3M267 510.5h4M210 111.5h1M309 111.5h1M183 301.5h1M280 301.5h1M208 107.5h1M296 107.5h1M301 107.5h1M313 107.5h1M212 113.5h1M308 113.5h1M921 662.5h1" stroke="#fff" stroke-width="1" fill="none"/>
<path d="M618.5 91v12M618.5 108v11M618.5 124v12M618.5 141v11M618.5 157v12M618.5 173v12M618.5 190v11M618.5 206v12M618.5 223v11M618.5 239v12M618.5 255v12M618.5 272v11M618.5 288v12M618.5 305v11M224.5 118v9M224.5 131v11M224.5 146v4M224.5 477v14M224.5 499v14M396.5 475v8M396.5 489v8M396.5 503v8M586.5 219v15M299.5 118v8M299.5 130v10M299.5 165v6M299.5 172v5M299.5 182v12M299.5 198v12M299.5 216v6M299.5 488v14M179.5 475v8M179.5 489v8M179.5 503v8M249.5 119v11M249.5 134v11M249.5 477v14M249.5 499v14M579 226.5h15M185 193.5h10M196 193.5h2M199 193.5h12M213 193.5h1M216 193.5h11M229 193.5h2M232 193.5h12M245 193.5h2M249 193.5h7M257 193.5h85M344 193.5h1M347 193.5h12M360 193.5h2M363 193.5h6M531 193.5h11M543 193.5h2M547 193.5h11M560 193.5h1M563 193.5h1M565 193.5h10M576 193.5h2M579 193.5h1M581 193.5h1M583 193.5h1M586 193.5h4M591 193.5h12M605 193.5h2M608 193.5h1M610 193.5h17M628 193.5h1M630 193.5h2M634 193.5h7M642 193.5h1M645 193.5h1M647 193.5h4M653 193.5h1M655 193.5h1M658 193.5h2M661 193.5h11M675 193.5h1M678 193.5h10M618 122.5h1M218 483.5h14M243 483.5h14M134 494.5h10M146 494.5h2M149 494.5h12M162 494.5h2M166 494.5h11M182 494.5h12M195 494.5h2M198 494.5h12M212 494.5h1M215 494.5h11M228 494.5h2M231 494.5h12M244 494.5h2M248 494.5h11M261 494.5h1M264 494.5h12M277 494.5h2M280 494.5h12M293 494.5h15M310 494.5h2M313 494.5h12M326 494.5h2M330 494.5h11M343 494.5h1M346 494.5h12M359 494.5h2M362 494.5h12M376 494.5h1M379 494.5h11M392 494.5h2M395 494.5h12M408 494.5h2M412 494.5h7M260 239.5h8M270 239.5h2M274 239.5h8M179 499.5h1M396 499.5h1M618 301.5h1M253 142.5h12M267 142.5h3M272 142.5h8M613 142.5h11M179 485.5h1M396 485.5h1M618 170.5h1M249 146.5h1M224 129.5h1M249 147.5h1M218 505.5h14M243 505.5h14M179 486.5h1M396 486.5h1M618 286.5h1M618 137.5h1M249 132.5h1M249 131.5h1M179 500.5h1M396 500.5h1M618 253.5h1M299 127.5h1M224 144.5h1M299 212.5h1M618 121.5h1M618 220.5h1M179 513.5h1M396 513.5h1M618 187.5h1M618 285.5h1M618 154.5h1M618 252.5h1M618 219.5h1M224 143.5h1M618 138.5h1M224 116.5h1M299 116.5h1M224 128.5h1M299 128.5h1M618 204.5h1M618 302.5h1M618 171.5h1M299 179.5h1M618 105.5h1M299 211.5h1M299 196.5h1M618 269.5h1M299 115.5h1M618 236.5h1M299 195.5h1M618 203.5h1" stroke="#f00" stroke-width="1" fill="none"/>
<path d="M647.5 158v5M647.5 224v5M266.5 145v4M266.5 151v4M266.5 157v3M266.5 228v4M266.5 234v5M266.5 240v8M266.5 440v32M266.5 473v12M266.5 505v11M266.5 517v32M320.5 155v5M320.5 456v5M320.5 462v5M320.5 475v11M320.5 495v10M320.5 513v11M670.5 206v3M296.5 155v17M589.5 158v7M589.5 222v4M581.5 184v3M581.5 201v3M275.5 144v13M275.5 229v10M275.5 240v8M275.5 440v19M275.5 530v19M584.5 180v3M299.5 140v11M299.5 155v10M299.5 448v11M299.5 463v9M654.5 157v7M654.5 180v3M654.5 188v7M654.5 196v4M654.5 204v3M654.5 223v7M568.5 212v3M651.5 207v3M840.5 79v3M667.5 170v3M582.5 157v6M582.5 180v3M582.5 187v4M582.5 193v6M582.5 227v3M277.5 229v3M277.5 456v3M277.5 530v3M621.5 154v18M567.5 175v3M567.5 209v3M564.5 188v10M652.5 180v3M652.5 204v3M669.5 175v3M669.5 209v3M653.5 183v3M653.5 200v3M319.5 171v7M319.5 183v5M319.5 194v4M319.5 205v3M319.5 211v5M655.5 184v3M583.5 200v4M583.5 207v3M810.5 76v4M615.5 154v18M580.5 190v4M580.5 195v4M301.5 155v17M672.5 188v10M566.5 205v4M668.5 212v3M801.5 79v3M819.5 76v4M656.5 190v6M656.5 197v3M569.5 170v3M278 155.5h11M291 155.5h2M294 155.5h14M310 155.5h2M313 155.5h2M316 155.5h4M580 155.5h1M613 155.5h5M619 155.5h5M656 155.5h1M587 149.5h1M649 149.5h1M603 245.5h4M630 245.5h3M568 174.5h1M585 174.5h1M587 174.5h1M649 174.5h1M651 174.5h1M668 174.5h1M575 225.5h1M582 225.5h1M598 225.5h1M601 225.5h2M635 225.5h1M638 225.5h1M661 225.5h1M573 163.5h1M583 163.5h1M588 163.5h1M594 163.5h2M598 163.5h2M638 163.5h1M641 163.5h2M648 163.5h1M653 163.5h1M578 157.5h1M583 157.5h2M587 157.5h2M605 157.5h2M613 157.5h5M619 157.5h4M624 157.5h1M630 157.5h2M648 157.5h2M652 157.5h2M658 157.5h1M585 208.5h1M603 208.5h1M633 208.5h1M653 208.5h1M574 224.5h1M582 224.5h1M587 224.5h1M596 224.5h2M599 224.5h2M636 224.5h2M639 224.5h1M649 224.5h1M662 224.5h1M575 150.5h1M586 150.5h1M650 150.5h1M661 150.5h1M572 165.5h1M590 165.5h1M592 165.5h1M641 165.5h1M644 165.5h1M646 165.5h1M664 165.5h1M589 238.5h1M647 238.5h1M312 171.5h7M587 171.5h1M589 171.5h1M596 171.5h1M616 171.5h2M619 171.5h2M640 171.5h1M646 171.5h2M649 171.5h1M586 214.5h1M588 214.5h1M648 214.5h1M650 214.5h1M592 145.5h2M643 145.5h2M577 158.5h1M583 158.5h1M603 158.5h2M610 158.5h3M625 158.5h4M632 158.5h2M648 158.5h1M659 158.5h1M579 154.5h1M581 154.5h1M616 154.5h2M619 154.5h2M655 154.5h1M657 154.5h1M278 456.5h10M290 456.5h2M293 456.5h2M296 456.5h11M309 456.5h2M312 456.5h2M315 456.5h5M576 159.5h1M584 159.5h1M600 159.5h2M605 159.5h3M629 159.5h1M631 159.5h1M635 159.5h2M652 159.5h1M660 159.5h1M584 177.5h1M650 177.5h3M573 223.5h2M583 223.5h1M588 223.5h1M595 223.5h1M637 223.5h2M641 223.5h2M648 223.5h1M653 223.5h1M662 223.5h1M575 160.5h2M585 160.5h1M598 160.5h2M603 160.5h2M632 160.5h2M637 160.5h2M651 160.5h1M660 160.5h2M320 510.5h1M587 162.5h1M596 162.5h1M599 162.5h2M636 162.5h1M640 162.5h1M649 162.5h1M662 162.5h1M276 229.5h1M578 229.5h1M583 229.5h2M587 229.5h2M605 229.5h3M613 229.5h5M619 229.5h1M621 229.5h4M629 229.5h1M631 229.5h1M648 229.5h2M652 229.5h2M658 229.5h1M573 164.5h1M584 164.5h5M594 164.5h1M596 164.5h2M639 164.5h2M642 164.5h1M647 164.5h1M649 164.5h5M663 164.5h1M577 228.5h1M583 228.5h1M589 228.5h1M608 228.5h4M625 228.5h1M628 228.5h1M632 228.5h2M648 228.5h1M659 228.5h1M588 170.5h1M590 170.5h1M595 170.5h1M641 170.5h1M646 170.5h1M648 170.5h1M594 144.5h11M607 144.5h2M610 144.5h2M613 144.5h3M621 144.5h3M626 144.5h2M629 144.5h2M632 144.5h11M607 246.5h6M624 246.5h6M585 209.5h2M602 209.5h1M634 209.5h1M652 209.5h2M579 230.5h1M585 230.5h1M587 230.5h1M608 230.5h1M610 230.5h3M626 230.5h3M650 230.5h3M657 230.5h1M806 80.5h1M827 80.5h1M830 80.5h2M835 80.5h1M570 168.5h1M592 168.5h2M643 168.5h2M299 152.5h1M577 152.5h1M583 152.5h1M653 152.5h1M659 152.5h1M312 215.5h7M569 215.5h1M587 215.5h1M589 215.5h2M596 215.5h1M640 215.5h1M646 215.5h2M649 215.5h1M667 215.5h1M278 231.5h10M290 231.5h2M293 231.5h2M296 231.5h11M309 231.5h2M312 231.5h1M580 231.5h1M613 231.5h1M615 231.5h3M619 231.5h1M621 231.5h3M656 231.5h1M276 156.5h3M579 156.5h1M581 156.5h1M585 156.5h3M609 156.5h4M624 156.5h4M650 156.5h3M655 156.5h1M657 156.5h1M571 220.5h1M591 220.5h1M594 220.5h1M641 220.5h2M645 220.5h1M570 169.5h1M591 169.5h1M594 169.5h1M642 169.5h1M645 169.5h1M800 79.5h7M811 79.5h8M828 79.5h1M830 79.5h1M836 79.5h1M591 240.5h2M644 240.5h2M278 532.5h10M290 532.5h2M293 532.5h2M296 532.5h11M309 532.5h2M312 532.5h2M315 532.5h6M276 458.5h1M299 476.5h1M565 183.5h1M583 183.5h1M608 183.5h1M628 183.5h1M319 192.5h1M617 192.5h1M619 192.5h1M590 147.5h1M646 147.5h1M604 207.5h1M632 207.5h1M591 146.5h1M645 146.5h1M582 206.5h1M605 206.5h1M631 206.5h1M809 74.5h17M839 74.5h1M267 235.5h8M576 235.5h1M651 235.5h1M660 235.5h1M572 221.5h1M590 221.5h1M592 221.5h2M595 221.5h1M643 221.5h1M646 221.5h1M664 221.5h1M617 194.5h1M619 194.5h1M808 76.5h1M811 76.5h8M837 76.5h1M587 237.5h2M648 237.5h2M319 181.5h1M566 181.5h1M606 181.5h1M630 181.5h1M670 181.5h1M568 173.5h1M588 173.5h1M598 173.5h1M638 173.5h1M668 173.5h1M575 226.5h1M603 226.5h2M632 226.5h2M637 226.5h2M651 226.5h1M661 226.5h1M807 78.5h1M811 78.5h8M829 78.5h1M836 78.5h1M839 78.5h1M585 212.5h1M587 212.5h1M649 212.5h1M614 189.5h1M622 189.5h1M585 175.5h1M587 175.5h1M600 175.5h1M636 175.5h1M649 175.5h1M651 175.5h1M299 153.5h1M578 153.5h1M582 153.5h1M654 153.5h1M658 153.5h1M584 176.5h1M586 176.5h1M650 176.5h1M652 176.5h1M584 222.5h2M587 222.5h2M594 222.5h1M596 222.5h2M639 222.5h1M642 222.5h1M647 222.5h1M649 222.5h5M664 222.5h1M589 218.5h1M592 218.5h2M643 218.5h2M647 218.5h1M666 218.5h1M586 210.5h1M601 210.5h1M635 210.5h1M652 210.5h1M319 202.5h1M565 202.5h1M609 202.5h1M627 202.5h1M583 179.5h1M585 179.5h1M604 179.5h1M632 179.5h1M653 179.5h1M670 179.5h1M616 195.5h1M620 195.5h1M586 213.5h1M598 213.5h1M638 213.5h1M648 213.5h1M650 213.5h1M615 196.5h1M621 196.5h1M565 186.5h1M583 186.5h1M588 148.5h2M647 148.5h2M802 83.5h1M804 83.5h1M832 83.5h1M834 83.5h1M593 241.5h3M641 241.5h3M566 180.5h1M605 180.5h1M631 180.5h1M576 227.5h2M589 227.5h1M600 227.5h3M606 227.5h2M629 227.5h3M634 227.5h1M659 227.5h2M802 82.5h1M805 82.5h1M829 82.5h1M832 82.5h1M834 82.5h1M839 82.5h1M579 232.5h1M581 232.5h1M657 232.5h1M267 247.5h8M613 247.5h5M619 247.5h6M267 548.5h8M583 185.5h1M671 185.5h1M571 166.5h1M591 166.5h1M594 166.5h1M641 166.5h2M645 166.5h1M665 166.5h1M319 203.5h1M565 203.5h1M655 203.5h1M671 203.5h1M276 530.5h1M320 530.5h1M807 77.5h1M811 77.5h8M837 77.5h1M590 167.5h4M644 167.5h3M665 167.5h1M805 81.5h1M828 81.5h1M831 81.5h1M835 81.5h1M576 151.5h1M585 151.5h1M651 151.5h1M660 151.5h1M655 200.5h1M671 200.5h1M575 236.5h1M586 236.5h1M651 236.5h1M661 236.5h1M582 204.5h1M584 204.5h1M607 204.5h1M671 204.5h1M312 516.5h6M565 184.5h1M609 184.5h1M627 184.5h1M671 184.5h1M592 219.5h1M643 219.5h4M665 219.5h1M267 440.5h8M319 191.5h1M616 191.5h1M620 191.5h1M586 172.5h1M588 172.5h1M650 172.5h1M267 243.5h8M597 243.5h1M638 243.5h1M610 201.5h1M626 201.5h1M671 201.5h1M577 234.5h1M584 234.5h1M659 234.5h1M600 244.5h1M634 244.5h2M320 527.5h1M299 475.5h1M607 182.5h1M629 182.5h1M671 182.5h1M320 511.5h1M320 470.5h1M320 488.5h1M589 239.5h2M646 239.5h2M570 217.5h1M589 217.5h1M591 217.5h1M594 217.5h1M642 217.5h1M645 217.5h1M647 217.5h1M640 242.5h1M299 460.5h1M299 478.5h1M320 507.5h1M585 211.5h1M587 211.5h1M600 211.5h1M636 211.5h1M649 211.5h1M614 197.5h1M622 197.5h1M578 233.5h1M654 233.5h1M658 233.5h1M299 473.5h1M320 473.5h1M584 205.5h1M630 205.5h1M565 187.5h1M580 187.5h1M612 187.5h1M624 187.5h1M656 187.5h1M671 187.5h1M602 161.5h1M634 161.5h2M661 161.5h1M320 469.5h1M585 178.5h1M603 178.5h1M633 178.5h1M651 178.5h1M670 178.5h1M320 529.5h1M588 216.5h1M590 216.5h1M667 216.5h1M320 472.5h1M320 508.5h1M803 85.5h1M565 199.5h1M612 199.5h1M624 199.5h1M808 75.5h1M838 75.5h1M299 461.5h1M320 489.5h1M803 84.5h2M833 84.5h1M320 492.5h1M840 73.5h1M320 491.5h1" stroke="#f0f" stroke-width="1" fill="none"/>
<path d="M903.5 303v7M820.5 303v7M895.5 304v6M865.5 304v4M876.5 303v7M770.5 303v6M845.5 304v4M899.5 304v6M835.5 303v7M846.5 303v7M857.5 307v3M827.5 304v5M807.5 303v7M769.5 303v7M839.5 304v6M850.5 304v6M891.5 304v6M789.5 303v6M853.5 303v6M811.5 304v6M869.5 304v6M815.5 303v7M879.5 303v7M816.5 307v3M797.5 303v4M841.5 304v6M906.5 304v5M898.5 303v7M773.5 304v6M784.5 305v3M871.5 304v6M864.5 304v3M822.5 305v3M792.5 303v6M818.5 303v7M880.5 307v3M791.5 303v7M764.5 303v6M875.5 303v7M859.5 303v7M821.5 303v7M802.5 303v7M867.5 304v6M806.5 303v7M829.5 304v3M904.5 303v7M882.5 303v7M897.5 306v4M866.5 304v6M847.5 304v6M901.5 305v4M885.5 304v6M813.5 303v7M786.5 303v7M767.5 303v6M843.5 304v4M889.5 303v7M858.5 303v7M873.5 304v4M851.5 304v4M801.5 303v7M763.5 303v7M774.5 303v7M831.5 303v6M900.5 307v3M758 305.5h5M775 305.5h4M781 305.5h5M790 305.5h4M796 305.5h5M819 305.5h5M828 305.5h5M834 305.5h5M842 305.5h13M868 305.5h7M902 305.5h4M758 303.5h5M766 303.5h6M788 303.5h6M796 303.5h5M804 303.5h6M819 303.5h5M834 303.5h5M855 303.5h6M880 303.5h5M759 308.5h1M766 308.5h6M788 308.5h7M804 308.5h6M812 308.5h3M823 308.5h1M828 308.5h5M842 308.5h1M849 308.5h1M855 308.5h6M864 308.5h1M868 308.5h1M881 308.5h3M890 308.5h1M893 308.5h13M766 304.5h7M798 304.5h3M804 304.5h6M812 304.5h6M826 304.5h5M842 304.5h3M849 304.5h6M863 304.5h6M872 304.5h3M880 304.5h5M761 306.5h1M766 306.5h14M790 306.5h5M798 306.5h3M814 306.5h1M819 306.5h5M833 306.5h6M842 306.5h3M863 306.5h6M881 306.5h1M886 306.5h5M893 306.5h4M902 306.5h4M760 307.5h1M768 307.5h1M781 307.5h5M800 307.5h1M812 307.5h6M828 307.5h1M830 307.5h1M848 307.5h7M870 307.5h5M886 307.5h5M902 307.5h4M758 309.5h5M766 309.5h1M772 309.5h7M781 309.5h7M803 309.5h7M812 309.5h13M826 309.5h1M832 309.5h1M834 309.5h5M848 309.5h1M855 309.5h6M863 309.5h1M870 309.5h5M878 309.5h6M886 309.5h5M894 309.5h3" stroke="#d0d0d0" stroke-width="1" fill="none"/>
<path d="M813 559.5h1M815 559.5h2M818 559.5h1M822 559.5h1M817 562.5h2M820 562.5h3M909 600.5h1M911 600.5h2M915 600.5h1M918 600.5h2M926 600.5h1M928 600.5h2M812 545.5h1M816 545.5h1M818 545.5h1M911 599.5h1M914 599.5h1M917 599.5h1M919 599.5h3M929 599.5h1M811 561.5h2M817 561.5h1M820 561.5h1M824 561.5h1M816 544.5h1M818 544.5h2M821 544.5h1M823 544.5h1M825 544.5h2M832 532.5h2M817 547.5h2M820 547.5h1M909 598.5h2M830 531.5h1M835 531.5h1M912 601.5h1M922 601.5h1M826 530.5h2M815 560.5h2M813 546.5h1M824 546.5h2M825 529.5h1M831 529.5h1M833 529.5h1" stroke="#000" stroke-width="1" fill="none"/>
</svg></body></html>
